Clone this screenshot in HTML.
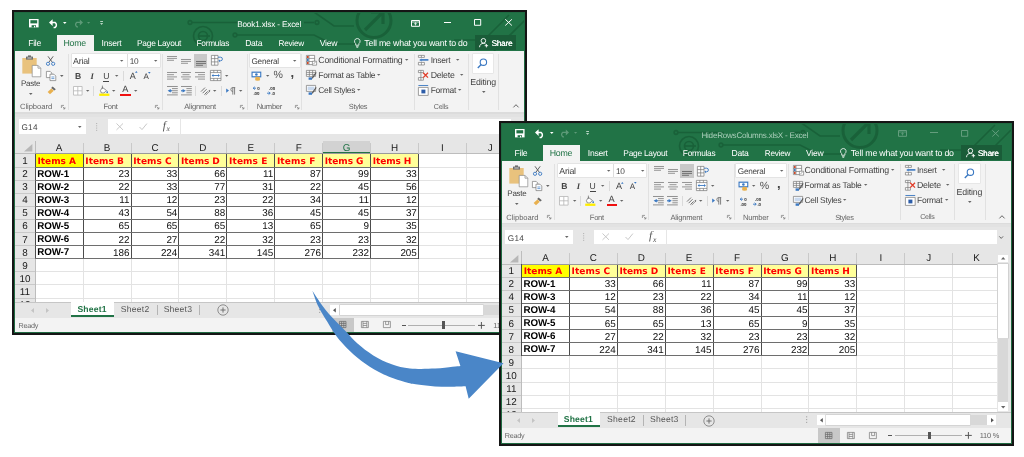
<!DOCTYPE html>
<html lang="en"><head><meta charset="utf-8"><title>Hide rows and columns in Excel</title>
<style>
html,body{margin:0;padding:0;background:#fff;}
body{width:1024px;height:457px;position:relative;overflow:hidden;font-family:"Liberation Sans",sans-serif;text-rendering:geometricPrecision;}
.win{position:absolute;width:511px;height:321px;border:2px solid #151515;overflow:hidden;background:#217346;filter:blur(0.5px);}
.win div,.win span,.win svg,body>svg{position:absolute;display:block;overflow:visible;}
.win span{white-space:pre;line-height:1em;}
</style></head><body>
<div class="win" style="left:12px;top:10px"><div style="left:0px;top:0px;width:511px;height:321px;"><div style="left:0px;top:0px;width:512px;height:39px;background:#217346;"></div><svg style="left:0px;top:0px;overflow:hidden;" width="512" height="39" viewBox="0 0 512 39"><g fill="none" stroke="#196139" stroke-width="1.7" opacity="0.95"><circle cx="176" cy="10.5" r="1.8"/><path d="M178 10.5H224"/><circle cx="189" cy="24" r="9.5"/><circle cx="189" cy="24" r="4.5"/><path d="M184 24H196"/><circle cx="221" cy="23" r="1.8"/><path d="M223 23H300L318 32H345"/><path d="M290 10.5H300"/><circle cx="303" cy="10.5" r="1.8"/><circle cx="360" cy="8.5" r="17" stroke-width="3"/><path d="M351 18L369 0M357 0H369V12" stroke-width="3.2"/><path d="M300 0L320 14H340"/><path d="M440 28H470L495 3"/><path d="M480 39L511 8"/></g></svg><svg style="left:14.6px;top:6.6px;" width="9.6" height="8.4" viewBox="0 0 9.6 8.4"><path d="M0 0H9.6V8.4H0Z" fill="#fff"/><path d="M1.4 1.2H8.2V4.4H1.4Z" fill="#217346"/><path d="M2.6 6.2H7V8.4H2.6Z" fill="#217346"/><path d="M5 6.8H6.2V8.4H5Z" fill="#fff"/></svg><svg style="left:35px;top:6.6px;" width="10.4" height="8.8" viewBox="0 0 10.4 8.8"><path d="M1 3.6H6.2A3 3 0 0 1 6.2 8.4H4.6" fill="none" stroke="#fff" stroke-width="1.5"/><path d="M0 3.6L3.6 0.2V7Z" fill="#fff"/></svg><svg style="left:49.2px;top:10.01px;" width="3.6" height="1.98" viewBox="0 0 3.6 1.98"><path d="M0 0H3.6L1.8 1.98Z" fill="#fff"/></svg><svg style="left:58.6px;top:6.8px;" width="10" height="8" viewBox="0 0 10 8"><path d="M9 3.4H3.8A2.6 2.6 0 0 0 3.8 7.8H5" fill="none" stroke="#5d9a78" stroke-width="1.3"/><path d="M10 3.4L6.8 0.4V6.4Z" fill="#5d9a78"/></svg><svg style="left:73.4px;top:10.12px;" width="3.2" height="1.76" viewBox="0 0 3.2 1.76"><path d="M0 0H3.2L1.6 1.76Z" fill="#5d9a78"/></svg><svg style="left:85.6px;top:9px;" width="3.2" height="4.4" viewBox="0 0 3.2 4.4"><path d="M0.2 0H3V0.9H0.2Z M0 2H3.2L1.6 4Z" fill="#b5d3c2"/></svg><span style="left:223.15px;top:9.3px;font-size:8.2px;color:#fff;letter-spacing:-0.16px;">Book1.xlsx - Excel</span><svg style="left:397.2px;top:7.6px;opacity:1.0;" width="9" height="6.8" viewBox="0 0 9 6.8"><path d="M0.5 0.5H8.5V6.3H0.5Z" fill="none" stroke="#fff" stroke-width="1"/><path d="M0.5 2H8.5" stroke="#fff" stroke-width="0.8"/><path d="M4.5 5.4V2.8M3.2 4L4.5 2.8L5.8 4" fill="none" stroke="#fff" stroke-width="0.8"/></svg><div style="left:430px;top:10px;width:7.2px;height:1px;background:#fff;opacity:1.0;"></div><svg style="left:460.2px;top:7.4px;opacity:1.0;" width="7.2" height="6.8" viewBox="0 0 7.2 6.8"><path d="M0.5 0.5H6.7V6.3H0.5Z" fill="none" stroke="#fff" stroke-width="1"/></svg><svg style="left:491.2px;top:7.4px;opacity:1.0;" width="7.2" height="6.8" viewBox="0 0 7.2 6.8"><path d="M0.3 0.3L6.9 6.5M6.9 0.3L0.3 6.5" fill="none" stroke="#fff" stroke-width="1"/></svg><div style="left:42.9px;top:23px;width:36.9px;height:16.2px;background:#f3f3f3;"></div><span style="left:14.15px;top:26.75px;font-size:8.7px;color:#fff;letter-spacing:-0.28px;">File</span><span style="left:49.45px;top:26.7px;font-size:8.8px;color:#217346;letter-spacing:-0.24px;">Home</span><span style="left:87.55px;top:26.8px;font-size:8.6px;color:#fff;letter-spacing:-0.27px;">Insert</span><span style="left:123.05px;top:26.9px;font-size:8.4px;color:#fff;letter-spacing:-0.27px;">Page Layout</span><span style="left:182.55px;top:26.95px;font-size:8.3px;color:#fff;letter-spacing:-0.26px;">Formulas</span><span style="left:231.15px;top:26.8px;font-size:8.6px;color:#fff;letter-spacing:-0.27px;">Data</span><span style="left:264.55px;top:27.5px;font-size:8.2px;color:#fff;letter-spacing:-0.25px;">Review</span><span style="left:305.65px;top:26.8px;font-size:8.6px;color:#fff;letter-spacing:-0.25px;">View</span><svg style="left:339.6px;top:26.2px;" width="6.6" height="10" viewBox="0 0 6.6 10"><path d="M3.3 0.5A2.8 2.8 0 0 1 4.9 5.6V7.2H1.7V5.6A2.8 2.8 0 0 1 3.3 0.5Z" fill="none" stroke="#fff" stroke-width="0.8"/><path d="M2 8.3H4.6M2.4 9.4H4.2" stroke="#fff" stroke-width="0.7"/></svg><span style="left:350.35px;top:26.7px;font-size:8.8px;color:#fff;letter-spacing:-0.2px;">Tell me what you want to do</span><div style="left:460.8px;top:22.8px;width:41.2px;height:15.2px;background:#1a5c38;"></div><svg style="left:465.4px;top:26px;" width="9.6" height="9.6" viewBox="0 0 9.6 9.6"><circle cx="4.4" cy="2.8" r="2.3" fill="none" stroke="#fff" stroke-width="0.9"/><path d="M0.5 9.2C0.8 6.4 2.4 5.4 4.4 5.4C5.4 5.4 6 5.6 6.6 6" fill="none" stroke="#fff" stroke-width="0.9"/><path d="M7.4 6V9.4M5.7 7.7H9.1" stroke="#fff" stroke-width="0.9"/></svg><span style="left:477.55px;top:27.5px;font-size:8.2px;color:#fff;letter-spacing:-0.24px;text-shadow:0.25px 0 0 #fff;">Share</span><div style="left:0px;top:39px;width:512px;height:61.4px;background:#f3f3f3;"></div><div style="left:0px;top:100.4px;width:512px;height:1.2px;background:#dcdcdc;"></div><div style="left:0px;top:101.6px;width:512px;height:3px;background:#e2e2e2;"></div><div style="left:53.6px;top:42px;width:0.9px;height:56px;background:#e1e1e1;"></div><div style="left:148px;top:42px;width:0.9px;height:56px;background:#e1e1e1;"></div><div style="left:233.2px;top:42px;width:0.9px;height:56px;background:#e1e1e1;"></div><div style="left:287.4px;top:42px;width:0.9px;height:56px;background:#e1e1e1;"></div><div style="left:399.8px;top:42px;width:0.9px;height:56px;background:#e1e1e1;"></div><div style="left:454px;top:42px;width:0.9px;height:56px;background:#e1e1e1;"></div><div style="left:484.4px;top:42px;width:0.9px;height:56px;background:#e1e1e1;"></div><span style="left:5.95px;top:91.3px;font-size:7.6px;color:#666;letter-spacing:-0.04px;">Clipboard</span><span style="left:89.45px;top:91.3px;font-size:7.6px;color:#666;letter-spacing:-0.25px;">Font</span><span style="left:170.15px;top:91.3px;font-size:7.6px;color:#666;letter-spacing:-0.23px;">Alignment</span><span style="left:242.65px;top:91.3px;font-size:7.6px;color:#666;letter-spacing:-0.26px;">Number</span><span style="left:334.85px;top:91.4px;font-size:7.4px;color:#666;letter-spacing:-0.28px;">Styles</span><span style="left:419.85px;top:92.05px;font-size:7.1px;color:#666;letter-spacing:-0.28px;">Cells</span><svg style="left:47px;top:92.8px;" width="4.4" height="4.4" viewBox="0 0 4.4 4.4"><path d="M0.4 3V0.4H3" fill="none" stroke="#777" stroke-width="0.7"/><path d="M1.6 1.6L3.8 3.8M3.9 2.2V3.9H2.2" fill="none" stroke="#777" stroke-width="0.7"/></svg><svg style="left:141.4px;top:92.8px;" width="4.4" height="4.4" viewBox="0 0 4.4 4.4"><path d="M0.4 3V0.4H3" fill="none" stroke="#777" stroke-width="0.7"/><path d="M1.6 1.6L3.8 3.8M3.9 2.2V3.9H2.2" fill="none" stroke="#777" stroke-width="0.7"/></svg><svg style="left:226.4px;top:92.8px;" width="4.4" height="4.4" viewBox="0 0 4.4 4.4"><path d="M0.4 3V0.4H3" fill="none" stroke="#777" stroke-width="0.7"/><path d="M1.6 1.6L3.8 3.8M3.9 2.2V3.9H2.2" fill="none" stroke="#777" stroke-width="0.7"/></svg><svg style="left:280.6px;top:92.8px;" width="4.4" height="4.4" viewBox="0 0 4.4 4.4"><path d="M0.4 3V0.4H3" fill="none" stroke="#777" stroke-width="0.7"/><path d="M1.6 1.6L3.8 3.8M3.9 2.2V3.9H2.2" fill="none" stroke="#777" stroke-width="0.7"/></svg><svg style="left:499px;top:92.4px;" width="6" height="3.8" viewBox="0 0 6 3.8"><path d="M0.4 3.4L3 0.7L5.6 3.4" fill="none" stroke="#555" stroke-width="0.9"/></svg><svg style="left:8.4px;top:42.6px;" width="19.4" height="22.2" viewBox="0 0 19.4 22.2"><path d="M0.3 3H14.7V18.6H0.3Z" fill="#e9c27d"/><path d="M4 1.6H11V4.6H4Z" fill="#6d6d6d"/><path d="M6 0.4H9V2.4H6Z" fill="#6d6d6d"/><path d="M5.4 3H9.6" stroke="#fff" stroke-width="0.7"/><path d="M10.2 10.4H16L18.8 13.2V21.8H10.2Z" fill="#fff" stroke="#8a8a8a" stroke-width="0.7"/><path d="M16 10.4V13.2H18.8" fill="none" stroke="#8a8a8a" stroke-width="0.7"/></svg><span style="left:7.05px;top:67.5px;font-size:8px;color:#444;letter-spacing:-0.27px;">Paste</span><svg style="left:14.7px;top:80.61px;" width="3.6" height="1.98" viewBox="0 0 3.6 1.98"><path d="M0 0H3.6L1.8 1.98Z" fill="#666"/></svg><svg style="left:32.2px;top:43.6px;" width="9.2" height="9.8" viewBox="0 0 9.2 9.8"><path d="M2 0.3L6.4 6.4M7.2 0.3L2.8 6.4" stroke="#555" stroke-width="0.9" fill="none"/><circle cx="2" cy="7.8" r="1.6" fill="none" stroke="#3a78c2" stroke-width="0.9"/><circle cx="7.2" cy="7.8" r="1.6" fill="none" stroke="#3a78c2" stroke-width="0.9"/></svg><svg style="left:32px;top:58.6px;" width="10.4" height="10" viewBox="0 0 10.4 10"><path d="M0.4 0.4H4.2L5.8 2V6.6H0.4Z" fill="#fff" stroke="#777" stroke-width="0.7"/><path d="M4 3.2H8L9.8 5V9.6H4Z" fill="#fff" stroke="#777" stroke-width="0.7"/><path d="M5.4 6H8.4M5.4 7.6H8.4" stroke="#3a78c2" stroke-width="0.7"/></svg><svg style="left:45.5px;top:62.61px;" width="3.6" height="1.98" viewBox="0 0 3.6 1.98"><path d="M0 0H3.6L1.8 1.98Z" fill="#666"/></svg><svg style="left:32.8px;top:74.4px;" width="9.4" height="8.6" viewBox="0 0 9.4 8.6"><path d="M5.6 0.6L8.8 3.2L7.4 4.6L4.2 2Z" fill="#666"/><path d="M4.4 2.6L6.8 4.8L3 8.2L0.6 6Z" fill="#e8b04e"/></svg><div style="left:57.5px;top:41.6px;width:55.4px;height:13.6px;background:#fff;box-shadow:0 0 0 0.5px #d6d6d6;"></div><div style="left:113.6px;top:41.6px;width:32px;height:13.6px;background:#fff;box-shadow:0 0 0 0.5px #d6d6d6;"></div><span style="left:59.05px;top:44.9px;font-size:8.8px;color:#444;letter-spacing:-0.22px;">Arial</span><svg style="left:106.3px;top:47.66px;" width="3.4" height="1.87" viewBox="0 0 3.4 1.87"><path d="M0 0H3.4L1.7 1.87Z" fill="#666"/></svg><span style="left:115.65px;top:45.15px;font-size:8.3px;color:#444;letter-spacing:-0.27px;">10</span><svg style="left:140.3px;top:47.66px;" width="3.4" height="1.87" viewBox="0 0 3.4 1.87"><path d="M0 0H3.4L1.7 1.87Z" fill="#666"/></svg><span style="left:61px;top:59.6px;font-size:8.6px;color:#444;font-weight:700;">B</span><span style="left:76.4px;top:59.6px;font-size:8.6px;color:#444;font-weight:700;font-style:italic;font-family:'Liberation Serif',serif;">I</span><span style="left:89.2px;top:59.6px;font-size:8.6px;color:#444;border-bottom:0.8px solid #444;padding-bottom:0.6px;">U</span><svg style="left:100.8px;top:62.66px;" width="3.4" height="1.87" viewBox="0 0 3.4 1.87"><path d="M0 0H3.4L1.7 1.87Z" fill="#666"/></svg><div style="left:108.5px;top:59px;width:0.8px;height:10px;background:#dadada;"></div><span style="left:115.8px;top:59.7px;font-size:9px;color:#444;">A</span><svg style="left:121px;top:59.4px;" width="2.6" height="1.8" viewBox="0 0 2.6 1.8"><path d="M0 1.8L1.3 0L2.6 1.8Z" fill="#3a78c2"/></svg><span style="left:129.4px;top:60.7px;font-size:8px;color:#444;">A</span><svg style="left:134px;top:59.6px;" width="2.6" height="1.8" viewBox="0 0 2.6 1.8"><path d="M0 0L1.3 1.8L2.6 0Z" fill="#3a78c2"/></svg><svg style="left:59px;top:74px;" width="9.6" height="9.6" viewBox="0 0 9.6 9.6"><path d="M0.5 0.5H9.1V9.1H0.5ZM4.8 0.5V9.1M0.5 4.8H9.1" fill="#fff" stroke="#b5b5b5" stroke-width="0.8"/></svg><svg style="left:72.3px;top:77.66px;" width="3.4" height="1.87" viewBox="0 0 3.4 1.87"><path d="M0 0H3.4L1.7 1.87Z" fill="#666"/></svg><div style="left:79.2px;top:73.5px;width:0.8px;height:10px;background:#dadada;"></div><svg style="left:85px;top:73px;" width="10.6" height="11" viewBox="0 0 10.6 11"><path d="M3.4 2.4L7.4 5.4L5 8H2.4L1.4 5.6Z" fill="#fff" stroke="#666" stroke-width="0.7"/><path d="M3.4 0.6V4" stroke="#666" stroke-width="0.7"/><path d="M8 5.6C8.8 6.6 9 7 9 7.5A0.8 0.8 0 0 1 7.4 7.5C7.4 7 7.6 6.6 8 5.6Z" fill="#3a78c2"/><path d="M0.2 8.6H10.4V10.9H0.2Z" fill="#ffee00"/></svg><svg style="left:98.3px;top:77.66px;" width="3.4" height="1.87" viewBox="0 0 3.4 1.87"><path d="M0 0H3.4L1.7 1.87Z" fill="#666"/></svg><span style="left:108.2px;top:73px;font-size:9.2px;color:#444;">A</span><div style="left:106.4px;top:81.5px;width:10.4px;height:2.4px;background:#f01010;"></div><svg style="left:119.7px;top:77.66px;" width="3.4" height="1.87" viewBox="0 0 3.4 1.87"><path d="M0 0H3.4L1.7 1.87Z" fill="#666"/></svg><svg style="left:153.4px;top:44.2px;" width="10" height="6.2" viewBox="0 0 10 6.2"><path d="M0 0.5H10" stroke="#8a8a8a" stroke-width="0.9"/><path d="M0 2.4H10" stroke="#8a8a8a" stroke-width="0.9"/><path d="M0 4.3H7" stroke="#8a8a8a" stroke-width="0.9"/></svg><svg style="left:167.3px;top:46.6px;" width="10" height="6.2" viewBox="0 0 10 6.2"><path d="M0 0.5H10" stroke="#8a8a8a" stroke-width="0.9"/><path d="M0 2.4H10" stroke="#8a8a8a" stroke-width="0.9"/><path d="M0 4.3H7" stroke="#8a8a8a" stroke-width="0.9"/></svg><div style="left:179.5px;top:41.6px;width:13.8px;height:14.2px;background:#c8c8c8;"></div><svg style="left:181.6px;top:48.6px;" width="10" height="6.2" viewBox="0 0 10 6.2"><path d="M0 0.5H10" stroke="#666" stroke-width="0.9"/><path d="M0 2.4H10" stroke="#666" stroke-width="0.9"/><path d="M0 4.3H7" stroke="#666" stroke-width="0.9"/></svg><svg style="left:196.6px;top:43.4px;" width="12" height="10.6" viewBox="0 0 12 10.6"><path d="M0.4 0.4H7V10.2H0.4ZM0.4 3.6H7M0.4 6.9H7M3.7 0.4V10.2" fill="#fff" stroke="#777" stroke-width="0.7"/><path d="M7 2.2H9.6A1.8 1.8 0 0 1 9.6 5.8H8.2" fill="none" stroke="#3a78c2" stroke-width="0.9"/><path d="M8.8 4.4L7.4 5.8L8.8 7.2Z" fill="#3a78c2"/></svg><svg style="left:153.4px;top:59.8px;" width="10" height="9.3" viewBox="0 0 10 9.3"><path d="M0 0.5H10" stroke="#8a8a8a" stroke-width="0.9"/><path d="M0 2.7H7" stroke="#8a8a8a" stroke-width="0.9"/><path d="M0 4.9H10" stroke="#8a8a8a" stroke-width="0.9"/><path d="M0 7.1H7" stroke="#8a8a8a" stroke-width="0.9"/></svg><svg style="left:167.3px;top:59.8px;" width="10" height="9.3" viewBox="0 0 10 9.3"><path d="M0 0.5H10" stroke="#8a8a8a" stroke-width="0.9"/><path d="M1.5 2.7H8.5" stroke="#8a8a8a" stroke-width="0.9"/><path d="M0 4.9H10" stroke="#8a8a8a" stroke-width="0.9"/><path d="M1.5 7.1H8.5" stroke="#8a8a8a" stroke-width="0.9"/></svg><svg style="left:181.4px;top:59.8px;" width="10" height="9.3" viewBox="0 0 10 9.3"><path d="M0 0.5H10" stroke="#8a8a8a" stroke-width="0.9"/><path d="M3 2.7H10" stroke="#8a8a8a" stroke-width="0.9"/><path d="M0 4.9H10" stroke="#8a8a8a" stroke-width="0.9"/><path d="M3 7.1H10" stroke="#8a8a8a" stroke-width="0.9"/></svg><svg style="left:196px;top:58px;" width="11.4" height="11" viewBox="0 0 11.4 11"><path d="M0.4 0.4H11V10.6H0.4ZM0.4 2.6H11M0.4 8.4H11M3.8 0.4V2.6M7.4 0.4V2.6M3.8 8.4V10.6M7.4 8.4V10.6" fill="#fff" stroke="#777" stroke-width="0.7"/><path d="M2.2 5.5H9.2" stroke="#3a78c2" stroke-width="0.9"/><path d="M3.4 4L1.6 5.5L3.4 7ZM8 4L9.8 5.5L8 7Z" fill="#3a78c2"/></svg><svg style="left:210.9px;top:62.66px;" width="3.4" height="1.87" viewBox="0 0 3.4 1.87"><path d="M0 0H3.4L1.7 1.87Z" fill="#666"/></svg><svg style="left:152.6px;top:74px;" width="10.8" height="9.4" viewBox="0 0 10.8 9.4"><path d="M0 0.5H10.8M5 2.6H10.8M5 4.7H10.8M5 6.8H10.8M0 8.9H10.8" stroke="#777" stroke-width="0.8"/><path d="M3.8 3V6.6L0.6 4.8Z" fill="#3a78c2"/><path d="M2 4.8H5" stroke="#3a78c2" stroke-width="1.2"/></svg><svg style="left:166.8px;top:74px;" width="10.8" height="9.4" viewBox="0 0 10.8 9.4"><path d="M0 0.5H10.8M5.4 2.6H10.8M5.4 4.7H10.8M5.4 6.8H10.8M0 8.9H10.8" stroke="#777" stroke-width="0.8"/><path d="M1.6 3V6.6L4.8 4.8Z" fill="#3a78c2"/><path d="M0 4.8H3" stroke="#3a78c2" stroke-width="1.2"/></svg><div style="left:181.2px;top:73.5px;width:0.8px;height:10px;background:#dadada;"></div><svg style="left:185.8px;top:73.6px;" width="10.6" height="10" viewBox="0 0 10.6 10"><path d="M1 5.6L5 1.6M2.6 7.2L6.6 3.2M4.4 8.6L7.6 5.4" stroke="#666" stroke-width="0.9"/><path d="M5.6 9.2L9.8 5" stroke="#777" stroke-width="0.8"/><path d="M10.2 3.8L10 6.2L8.4 4.6Z" fill="#777"/></svg><svg style="left:198.7px;top:77.66px;" width="3.4" height="1.87" viewBox="0 0 3.4 1.87"><path d="M0 0H3.4L1.7 1.87Z" fill="#666"/></svg><div style="left:207px;top:73.5px;width:0.8px;height:10px;background:#dadada;"></div><svg style="left:212px;top:74.6px;" width="9.4" height="8" viewBox="0 0 9.4 8"><path d="M0.2 1.4V5.8L3 3.6Z" fill="#3a78c2"/><path d="M6.8 0.6V7.6M8.6 0.6V7.6M9.2 0.6H6.2A2 2 0 0 0 6.2 4.4H6.8" fill="none" stroke="#666" stroke-width="0.8"/></svg><svg style="left:225.3px;top:77.66px;" width="3.4" height="1.87" viewBox="0 0 3.4 1.87"><path d="M0 0H3.4L1.7 1.87Z" fill="#666"/></svg><div style="left:235.8px;top:42px;width:49.8px;height:13.2px;background:#fff;box-shadow:0 0 0 0.5px #d6d6d6;"></div><span style="left:237.45px;top:45.7px;font-size:8.2px;color:#444;letter-spacing:-0.24px;">General</span><svg style="left:279.2px;top:47.66px;" width="3.4" height="1.87" viewBox="0 0 3.4 1.87"><path d="M0 0H3.4L1.7 1.87Z" fill="#666"/></svg><svg style="left:237.4px;top:58.8px;" width="10.8" height="10.4" viewBox="0 0 10.8 10.4"><path d="M0.5 0.6H10.3V6.4H0.5Z" fill="#3a78c2"/><path d="M1.6 1.8H9.2V5.2H1.6Z" fill="#fff"/><circle cx="5.4" cy="3.5" r="1.3" fill="#3a78c2"/><ellipse cx="6.6" cy="7" rx="2.6" ry="1.2" fill="#e8b04e"/><ellipse cx="6.6" cy="8.6" rx="2.6" ry="1.2" fill="#e8b04e"/></svg><svg style="left:251.9px;top:62.66px;" width="3.4" height="1.87" viewBox="0 0 3.4 1.87"><path d="M0 0H3.4L1.7 1.87Z" fill="#666"/></svg><span style="left:259.4px;top:58.3px;font-size:10.6px;color:#555;">%</span><span style="left:276.6px;top:54.4px;font-size:13px;color:#444;font-weight:700;">,</span><svg style="left:239.2px;top:74.4px;" width="8.4" height="9.2" viewBox="0 0 8.4 9.2"><path d="M0 2.2H3M1.8 0.8L0.2 2.2L1.8 3.6" fill="none" stroke="#3a78c2" stroke-width="0.9"/><text x="4.2" y="3.6" font-size="4.4" fill="#333" font-weight="700" font-family="Liberation Sans,sans-serif">0</text><text x="0.4" y="8.8" font-size="4.4" fill="#333" font-weight="700" font-family="Liberation Sans,sans-serif">.00</text></svg><svg style="left:252.6px;top:74.4px;" width="8.6" height="9.2" viewBox="0 0 8.6 9.2"><text x="2" y="3.6" font-size="4.4" fill="#333" font-weight="700" font-family="Liberation Sans,sans-serif">.00</text><path d="M0 7.2H3.2M1.6 5.8L3.2 7.2L1.6 8.6" fill="none" stroke="#3a78c2" stroke-width="0.9"/><text x="4.4" y="8.8" font-size="4.4" fill="#333" font-weight="700" font-family="Liberation Sans,sans-serif">.0</text></svg><svg style="left:292.2px;top:42.8px;" width="11" height="10.6" viewBox="0 0 11 10.6"><path d="M0.4 0.4H8.6V9.6H0.4ZM0.4 3.4H8.6M0.4 6.5H8.6M3 0.4V9.6" fill="#fff" stroke="#777" stroke-width="0.7"/><path d="M1 1H2.6V3H1Z" fill="#d24726"/><path d="M1 3.8H2.6V6H1Z" fill="#3a78c2"/><path d="M1 6.9H2.6V9H1Z" fill="#d24726"/><path d="M6.4 6.2H10.6V10.2H6.4Z" fill="#fff" stroke="#666" stroke-width="0.6"/><path d="M7.4 8.8L9.6 7.2" stroke="#666" stroke-width="0.6"/></svg><svg style="left:292.2px;top:58.4px;" width="11" height="10.6" viewBox="0 0 11 10.6"><path d="M0.4 0.4H9.6V6.4H0.4ZM0.4 2.4H9.6M0.4 4.4H9.6M3.4 0.4V6.4M6.6 0.4V6.4" fill="#fff" stroke="#777" stroke-width="0.7"/><path d="M9.8 2L6 7.4L5.4 9L7 8.2L10.6 2.8Z" fill="#555"/><path d="M2.6 7.4H6V9.8H2.6Z" fill="#3a78c2"/></svg><svg style="left:292.2px;top:73.4px;" width="11" height="10.6" viewBox="0 0 11 10.6"><path d="M0.4 0.4H9.6V6.4H0.4Z" fill="#fff" stroke="#777" stroke-width="0.7"/><path d="M1.6 1.6H8.4V5.2H1.6Z" fill="#c9d9ee"/><path d="M9.8 2L6 7.4L5.4 9L7 8.2L10.6 2.8Z" fill="#555"/><path d="M2.6 7.4H6V9.8H2.6Z" fill="#3a78c2"/></svg><span style="left:304.25px;top:44.1px;font-size:8.8px;color:#444;letter-spacing:-0.19px;">Conditional Formatting</span><svg style="left:390.8px;top:47.27px;" width="3.4" height="1.87" viewBox="0 0 3.4 1.87"><path d="M0 0H3.4L1.7 1.87Z" fill="#666"/></svg><span style="left:304.25px;top:58.85px;font-size:8.5px;color:#444;letter-spacing:-0.25px;">Format as Table</span><svg style="left:363.2px;top:61.86px;" width="3.4" height="1.87" viewBox="0 0 3.4 1.87"><path d="M0 0H3.4L1.7 1.87Z" fill="#666"/></svg><span style="left:304.25px;top:73.8px;font-size:8.4px;color:#444;letter-spacing:-0.24px;">Cell Styles</span><svg style="left:343px;top:76.86px;" width="3.4" height="1.87" viewBox="0 0 3.4 1.87"><path d="M0 0H3.4L1.7 1.87Z" fill="#666"/></svg><svg style="left:404.2px;top:42.8px;" width="10.8" height="10.4" viewBox="0 0 10.8 10.4"><path d="M0.4 0.4H6.4V2.4H0.4ZM0.4 7.4H6.4V10H0.4ZM3.4 0.4V2.4M3.4 7.4V10" fill="#fff" stroke="#777" stroke-width="0.7"/><path d="M3.2 4.9H10.4" stroke="#3a78c2" stroke-width="1.6"/><path d="M3.6 3.4L1.2 4.9L3.6 6.4Z" fill="#3a78c2"/></svg><svg style="left:404.2px;top:57.8px;" width="10.8" height="10.6" viewBox="0 0 10.8 10.6"><path d="M0.4 0.4H5.4V2.6H0.4ZM0.4 7.6H5.4V10.2H0.4ZM2.9 0.4V10.2" fill="#fff" stroke="#777" stroke-width="0.7"/><path d="M5.2 2.8L10 7.6M10 2.8L5.2 7.6" stroke="#e03c28" stroke-width="1.3"/></svg><svg style="left:404.2px;top:72.8px;" width="10.8" height="10.8" viewBox="0 0 10.8 10.8"><path d="M0.4 2.4H10.2V10.4H0.4Z" fill="#fff" stroke="#777" stroke-width="0.7"/><path d="M0.4 0.5H10.2" stroke="#3a78c2" stroke-width="0.9"/><path d="M3.4 4.6H7.4V8.4H3.4Z" fill="#2d5da8"/></svg><span style="left:416.65px;top:44.25px;font-size:8.5px;color:#444;letter-spacing:-0.26px;">Insert</span><svg style="left:441.7px;top:47.27px;" width="3.4" height="1.87" viewBox="0 0 3.4 1.87"><path d="M0 0H3.4L1.7 1.87Z" fill="#666"/></svg><span style="left:416.65px;top:58.7px;font-size:8.8px;color:#444;letter-spacing:-0.26px;">Delete</span><svg style="left:446.1px;top:61.86px;" width="3.4" height="1.87" viewBox="0 0 3.4 1.87"><path d="M0 0H3.4L1.7 1.87Z" fill="#666"/></svg><span style="left:416.65px;top:73.75px;font-size:8.5px;color:#444;letter-spacing:-0.24px;">Format</span><svg style="left:444.2px;top:76.86px;" width="3.4" height="1.87" viewBox="0 0 3.4 1.87"><path d="M0 0H3.4L1.7 1.87Z" fill="#666"/></svg><div style="left:458.5px;top:41.6px;width:20.8px;height:19.4px;background:#fff;box-shadow:0 0 0 0.5px #dcdcdc;"></div><svg style="left:463.4px;top:45.6px;" width="10.6" height="10.6" viewBox="0 0 10.6 10.6"><circle cx="6.4" cy="4.2" r="3.2" fill="none" stroke="#3a78c2" stroke-width="1.1"/><path d="M4.2 6.6L0.8 10" stroke="#3a78c2" stroke-width="1.4"/></svg><span style="left:456.25px;top:65.6px;font-size:8.8px;color:#444;letter-spacing:-0.17px;">Editing</span><svg style="left:467.6px;top:79.21px;" width="3.6" height="1.98" viewBox="0 0 3.6 1.98"><path d="M0 0H3.6L1.8 1.98Z" fill="#666"/></svg><div style="left:0px;top:104.6px;width:512px;height:24.6px;background:#e6e6e6;"></div><div style="left:4.7px;top:107.4px;width:67.8px;height:14.6px;background:#fff;"></div><span style="left:7.45px;top:112.4px;font-size:8.2px;color:#444;letter-spacing:0.27px;">G14</span><svg style="left:64.4px;top:114.01px;" width="3.6" height="1.98" viewBox="0 0 3.6 1.98"><path d="M0 0H3.6L1.8 1.98Z" fill="#666"/></svg><svg style="left:82.4px;top:110.6px;" width="1.2" height="8" viewBox="0 0 1.2 8"><path d="M0 0.5H1.2M0 2.8H1.2M0 5.1H1.2M0 7.4H1.2" stroke="#aaa" stroke-width="0.8"/></svg><div style="left:93.8px;top:107.4px;width:72.2px;height:14.6px;background:#fff;"></div><svg style="left:101.6px;top:111px;" width="7.6" height="7.4" viewBox="0 0 7.6 7.4"><path d="M0.5 0.5L7 6.9M7 0.5L0.5 6.9" stroke="#c2c2c2" stroke-width="0.9" fill="none"/></svg><svg style="left:125px;top:111px;" width="8.4" height="7.4" viewBox="0 0 8.4 7.4"><path d="M0.5 4L3 6.6L7.9 0.6" stroke="#c2c2c2" stroke-width="0.9" fill="none"/></svg><span style="left:148.8px;top:109.05px;font-size:11.5px;color:#555;font-style:italic;font-family:'Liberation Serif',serif;">f</span><span style="left:152.6px;top:113.3px;font-size:7.6px;color:#555;font-style:italic;font-family:'Liberation Serif',serif;">x</span><div style="left:0px;top:129.2px;width:512px;height:161px;background:#fff;"></div><div style="left:0px;top:129.2px;width:512px;height:12.7px;background:#e6e6e6;"></div><div style="left:0px;top:129.2px;width:21.2px;height:161px;background:#e6e6e6;"></div><svg style="left:10px;top:132.4px;" width="8.4" height="7.6" viewBox="0 0 8.4 7.6"><path d="M8.4 0V7.6H0Z" fill="#b7b7b7"/></svg><div style="left:20.7px;top:141.9px;width:1px;height:148.3px;background:#e3e3e3;"></div><div style="left:20.7px;top:130.7px;width:1px;height:11.2px;background:#c9c9c9;"></div><div style="left:68.6px;top:141.9px;width:1px;height:148.3px;background:#e3e3e3;"></div><div style="left:68.6px;top:130.7px;width:1px;height:11.2px;background:#c9c9c9;"></div><div style="left:116.5px;top:141.9px;width:1px;height:148.3px;background:#e3e3e3;"></div><div style="left:116.5px;top:130.7px;width:1px;height:11.2px;background:#c9c9c9;"></div><div style="left:164.4px;top:141.9px;width:1px;height:148.3px;background:#e3e3e3;"></div><div style="left:164.4px;top:130.7px;width:1px;height:11.2px;background:#c9c9c9;"></div><div style="left:212.3px;top:141.9px;width:1px;height:148.3px;background:#e3e3e3;"></div><div style="left:212.3px;top:130.7px;width:1px;height:11.2px;background:#c9c9c9;"></div><div style="left:260.2px;top:141.9px;width:1px;height:148.3px;background:#e3e3e3;"></div><div style="left:260.2px;top:130.7px;width:1px;height:11.2px;background:#c9c9c9;"></div><div style="left:308.1px;top:141.9px;width:1px;height:148.3px;background:#e3e3e3;"></div><div style="left:308.1px;top:130.7px;width:1px;height:11.2px;background:#c9c9c9;"></div><div style="left:356px;top:141.9px;width:1px;height:148.3px;background:#e3e3e3;"></div><div style="left:356px;top:130.7px;width:1px;height:11.2px;background:#c9c9c9;"></div><div style="left:403.9px;top:141.9px;width:1px;height:148.3px;background:#e3e3e3;"></div><div style="left:403.9px;top:130.7px;width:1px;height:11.2px;background:#c9c9c9;"></div><div style="left:451.8px;top:141.9px;width:1px;height:148.3px;background:#e3e3e3;"></div><div style="left:451.8px;top:130.7px;width:1px;height:11.2px;background:#c9c9c9;"></div><div style="left:499.7px;top:141.9px;width:1px;height:148.3px;background:#e3e3e3;"></div><div style="left:499.7px;top:130.7px;width:1px;height:11.2px;background:#c9c9c9;"></div><div style="left:21.2px;top:141.4px;width:489.8px;height:1px;background:#e3e3e3;"></div><div style="left:0px;top:141.4px;width:21.2px;height:1px;background:#c9c9c9;"></div><div style="left:21.2px;top:154.5px;width:489.8px;height:1px;background:#e3e3e3;"></div><div style="left:0px;top:154.5px;width:21.2px;height:1px;background:#c9c9c9;"></div><div style="left:21.2px;top:167.6px;width:489.8px;height:1px;background:#e3e3e3;"></div><div style="left:0px;top:167.6px;width:21.2px;height:1px;background:#c9c9c9;"></div><div style="left:21.2px;top:180.7px;width:489.8px;height:1px;background:#e3e3e3;"></div><div style="left:0px;top:180.7px;width:21.2px;height:1px;background:#c9c9c9;"></div><div style="left:21.2px;top:193.8px;width:489.8px;height:1px;background:#e3e3e3;"></div><div style="left:0px;top:193.8px;width:21.2px;height:1px;background:#c9c9c9;"></div><div style="left:21.2px;top:206.9px;width:489.8px;height:1px;background:#e3e3e3;"></div><div style="left:0px;top:206.9px;width:21.2px;height:1px;background:#c9c9c9;"></div><div style="left:21.2px;top:220px;width:489.8px;height:1px;background:#e3e3e3;"></div><div style="left:0px;top:220px;width:21.2px;height:1px;background:#c9c9c9;"></div><div style="left:21.2px;top:233.1px;width:489.8px;height:1px;background:#e3e3e3;"></div><div style="left:0px;top:233.1px;width:21.2px;height:1px;background:#c9c9c9;"></div><div style="left:21.2px;top:246.2px;width:489.8px;height:1px;background:#e3e3e3;"></div><div style="left:0px;top:246.2px;width:21.2px;height:1px;background:#c9c9c9;"></div><div style="left:21.2px;top:259.3px;width:489.8px;height:1px;background:#e3e3e3;"></div><div style="left:0px;top:259.3px;width:21.2px;height:1px;background:#c9c9c9;"></div><div style="left:21.2px;top:272.4px;width:489.8px;height:1px;background:#e3e3e3;"></div><div style="left:0px;top:272.4px;width:21.2px;height:1px;background:#c9c9c9;"></div><div style="left:21.2px;top:285.5px;width:489.8px;height:1px;background:#e3e3e3;"></div><div style="left:0px;top:285.5px;width:21.2px;height:1px;background:#c9c9c9;"></div><div style="left:0px;top:141.3px;width:512px;height:1px;background:#bdbdbd;"></div><div style="left:20.6px;top:129.2px;width:1px;height:161px;background:#bdbdbd;"></div><span style="left:41.85px;top:131.65px;font-size:9.9px;color:#222;">A</span><span style="left:89.75px;top:131.65px;font-size:9.9px;color:#222;">B</span><span style="left:137.38px;top:131.65px;font-size:9.9px;color:#222;">C</span><span style="left:185.28px;top:131.65px;font-size:9.9px;color:#222;">D</span><span style="left:233.45px;top:131.65px;font-size:9.9px;color:#222;">E</span><span style="left:281.63px;top:131.65px;font-size:9.9px;color:#222;">F</span><div style="left:308.6px;top:129.2px;width:47.9px;height:11.1px;background:#d2d2d2;"></div><div style="left:308.6px;top:139.9px;width:47.9px;height:1.8px;background:#217346;"></div><span style="left:328.7px;top:131.65px;font-size:9.9px;color:#217346;">G</span><span style="left:376.88px;top:131.65px;font-size:9.9px;color:#222;">H</span><span style="left:426.97px;top:131.65px;font-size:9.9px;color:#222;">I</span><span style="left:473.77px;top:131.65px;font-size:9.9px;color:#222;">J</span><span style="left:8.25px;top:144.95px;font-size:9.9px;color:#1a1a1a;">1</span><span style="left:8.25px;top:158.05px;font-size:9.9px;color:#1a1a1a;">2</span><span style="left:8.25px;top:171.15px;font-size:9.9px;color:#1a1a1a;">3</span><span style="left:8.25px;top:184.25px;font-size:9.9px;color:#1a1a1a;">4</span><span style="left:8.25px;top:197.35px;font-size:9.9px;color:#1a1a1a;">5</span><span style="left:8.25px;top:210.45px;font-size:9.9px;color:#1a1a1a;">6</span><span style="left:8.25px;top:223.55px;font-size:9.9px;color:#1a1a1a;">7</span><span style="left:8.25px;top:236.65px;font-size:9.9px;color:#1a1a1a;">8</span><span style="left:8.25px;top:249.75px;font-size:9.9px;color:#1a1a1a;">9</span><span style="left:5.49px;top:262.85px;font-size:9.9px;color:#1a1a1a;">10</span><span style="left:5.86px;top:275.95px;font-size:9.9px;color:#1a1a1a;">11</span><span style="left:5.49px;top:289.05px;font-size:9.9px;color:#1a1a1a;">12</span><div style="left:21.2px;top:141.9px;width:47.9px;height:13.1px;background:#ffff00;"></div><span style="left:23.4px;top:145.5px;font-size:9px;color:#f00;font-weight:700;font-family:'DejaVu Sans','Liberation Sans',sans-serif;">Items A</span><div style="left:69.1px;top:141.9px;width:47.9px;height:13.1px;background:#ffff99;"></div><span style="left:71.3px;top:145.5px;font-size:9px;color:#f00;font-weight:700;font-family:'DejaVu Sans','Liberation Sans',sans-serif;letter-spacing:0.02px;">Items B</span><div style="left:117px;top:141.9px;width:47.9px;height:13.1px;background:#ffff99;"></div><span style="left:119.2px;top:145.5px;font-size:9px;color:#f00;font-weight:700;font-family:'DejaVu Sans','Liberation Sans',sans-serif;letter-spacing:0.05px;">Items C</span><div style="left:164.9px;top:141.9px;width:47.9px;height:13.1px;background:#ffff99;"></div><span style="left:167.1px;top:145.5px;font-size:9px;color:#f00;font-weight:700;font-family:'DejaVu Sans','Liberation Sans',sans-serif;letter-spacing:-0.07px;">Items D</span><div style="left:212.8px;top:141.9px;width:47.9px;height:13.1px;background:#ffff99;"></div><span style="left:215px;top:145.5px;font-size:9px;color:#f00;font-weight:700;font-family:'DejaVu Sans','Liberation Sans',sans-serif;letter-spacing:0.12px;">Items E</span><div style="left:260.7px;top:141.9px;width:47.9px;height:13.1px;background:#ffff99;"></div><span style="left:262.9px;top:145.5px;font-size:9px;color:#f00;font-weight:700;font-family:'DejaVu Sans','Liberation Sans',sans-serif;letter-spacing:0.12px;">Items F</span><div style="left:308.6px;top:141.9px;width:47.9px;height:13.1px;background:#ffff99;"></div><span style="left:310.8px;top:145.5px;font-size:9px;color:#f00;font-weight:700;font-family:'DejaVu Sans','Liberation Sans',sans-serif;letter-spacing:-0.06px;">Items G</span><div style="left:356.5px;top:141.9px;width:47.9px;height:13.1px;background:#ffff99;"></div><span style="left:358.7px;top:145.5px;font-size:9px;color:#f00;font-weight:700;font-family:'DejaVu Sans','Liberation Sans',sans-serif;letter-spacing:-0.08px;">Items H</span><span style="left:23.25px;top:157.5px;font-size:9.8px;color:#000;font-weight:700;letter-spacing:-0.15px;">ROW-1</span><span style="left:104.49px;top:158.05px;font-size:9.9px;color:#111;">23</span><span style="left:152.39px;top:158.05px;font-size:9.9px;color:#111;">33</span><span style="left:200.29px;top:158.05px;font-size:9.9px;color:#111;">66</span><span style="left:248.92px;top:158.05px;font-size:9.9px;color:#111;">11</span><span style="left:296.09px;top:158.05px;font-size:9.9px;color:#111;">87</span><span style="left:343.99px;top:158.05px;font-size:9.9px;color:#111;">99</span><span style="left:391.89px;top:158.05px;font-size:9.9px;color:#111;">33</span><span style="left:23.25px;top:170.6px;font-size:9.8px;color:#000;font-weight:700;letter-spacing:-0.15px;">ROW-2</span><span style="left:104.49px;top:171.15px;font-size:9.9px;color:#111;">22</span><span style="left:152.39px;top:171.15px;font-size:9.9px;color:#111;">33</span><span style="left:200.29px;top:171.15px;font-size:9.9px;color:#111;">77</span><span style="left:248.19px;top:171.15px;font-size:9.9px;color:#111;">31</span><span style="left:296.09px;top:171.15px;font-size:9.9px;color:#111;">22</span><span style="left:343.99px;top:171.15px;font-size:9.9px;color:#111;">45</span><span style="left:391.89px;top:171.15px;font-size:9.9px;color:#111;">56</span><span style="left:23.25px;top:183.7px;font-size:9.8px;color:#000;font-weight:700;letter-spacing:-0.15px;">ROW-3</span><span style="left:105.22px;top:184.25px;font-size:9.9px;color:#111;">11</span><span style="left:152.39px;top:184.25px;font-size:9.9px;color:#111;">12</span><span style="left:200.29px;top:184.25px;font-size:9.9px;color:#111;">23</span><span style="left:248.19px;top:184.25px;font-size:9.9px;color:#111;">22</span><span style="left:296.09px;top:184.25px;font-size:9.9px;color:#111;">34</span><span style="left:344.72px;top:184.25px;font-size:9.9px;color:#111;">11</span><span style="left:391.89px;top:184.25px;font-size:9.9px;color:#111;">12</span><span style="left:23.25px;top:196.8px;font-size:9.8px;color:#000;font-weight:700;letter-spacing:-0.15px;">ROW-4</span><span style="left:104.49px;top:197.35px;font-size:9.9px;color:#111;">43</span><span style="left:152.39px;top:197.35px;font-size:9.9px;color:#111;">54</span><span style="left:200.29px;top:197.35px;font-size:9.9px;color:#111;">88</span><span style="left:248.19px;top:197.35px;font-size:9.9px;color:#111;">36</span><span style="left:296.09px;top:197.35px;font-size:9.9px;color:#111;">45</span><span style="left:343.99px;top:197.35px;font-size:9.9px;color:#111;">45</span><span style="left:391.89px;top:197.35px;font-size:9.9px;color:#111;">37</span><span style="left:23.25px;top:209.9px;font-size:9.8px;color:#000;font-weight:700;letter-spacing:-0.15px;">ROW-5</span><span style="left:104.49px;top:210.45px;font-size:9.9px;color:#111;">65</span><span style="left:152.39px;top:210.45px;font-size:9.9px;color:#111;">65</span><span style="left:200.29px;top:210.45px;font-size:9.9px;color:#111;">65</span><span style="left:248.19px;top:210.45px;font-size:9.9px;color:#111;">13</span><span style="left:296.09px;top:210.45px;font-size:9.9px;color:#111;">65</span><span style="left:349.49px;top:210.45px;font-size:9.9px;color:#111;">9</span><span style="left:391.89px;top:210.45px;font-size:9.9px;color:#111;">35</span><span style="left:23.25px;top:223px;font-size:9.8px;color:#000;font-weight:700;letter-spacing:-0.15px;">ROW-6</span><span style="left:104.49px;top:223.55px;font-size:9.9px;color:#111;">22</span><span style="left:152.39px;top:223.55px;font-size:9.9px;color:#111;">27</span><span style="left:200.29px;top:223.55px;font-size:9.9px;color:#111;">22</span><span style="left:248.19px;top:223.55px;font-size:9.9px;color:#111;">32</span><span style="left:296.09px;top:223.55px;font-size:9.9px;color:#111;">23</span><span style="left:343.99px;top:223.55px;font-size:9.9px;color:#111;">23</span><span style="left:391.89px;top:223.55px;font-size:9.9px;color:#111;">32</span><span style="left:23.25px;top:236.1px;font-size:9.8px;color:#000;font-weight:700;letter-spacing:-0.15px;">ROW-7</span><span style="left:98.98px;top:236.65px;font-size:9.9px;color:#111;">186</span><span style="left:146.88px;top:236.65px;font-size:9.9px;color:#111;">224</span><span style="left:194.78px;top:236.65px;font-size:9.9px;color:#111;">341</span><span style="left:242.68px;top:236.65px;font-size:9.9px;color:#111;">145</span><span style="left:290.58px;top:236.65px;font-size:9.9px;color:#111;">276</span><span style="left:338.48px;top:236.65px;font-size:9.9px;color:#111;">232</span><span style="left:386.38px;top:236.65px;font-size:9.9px;color:#111;">205</span><div style="left:20.7px;top:141.9px;width:1px;height:104.8px;background:#4c4c4c;"></div><div style="left:68.6px;top:141.9px;width:1px;height:104.8px;background:#4c4c4c;"></div><div style="left:116.5px;top:141.9px;width:1px;height:104.8px;background:#4c4c4c;"></div><div style="left:164.4px;top:141.9px;width:1px;height:104.8px;background:#4c4c4c;"></div><div style="left:212.3px;top:141.9px;width:1px;height:104.8px;background:#4c4c4c;"></div><div style="left:260.2px;top:141.9px;width:1px;height:104.8px;background:#4c4c4c;"></div><div style="left:308.1px;top:141.9px;width:1px;height:104.8px;background:#4c4c4c;"></div><div style="left:356px;top:141.9px;width:1px;height:104.8px;background:#4c4c4c;"></div><div style="left:403.9px;top:141.9px;width:1px;height:104.8px;background:#4c4c4c;"></div><div style="left:21.2px;top:141.4px;width:383.2px;height:1px;background:#9a9a9a;"></div><div style="left:21.2px;top:154.5px;width:383.2px;height:1px;background:#6e6e6e;"></div><div style="left:21.2px;top:167.6px;width:383.2px;height:1px;background:#6e6e6e;"></div><div style="left:21.2px;top:180.7px;width:383.2px;height:1px;background:#6e6e6e;"></div><div style="left:21.2px;top:193.8px;width:383.2px;height:1px;background:#6e6e6e;"></div><div style="left:21.2px;top:206.9px;width:383.2px;height:1px;background:#6e6e6e;"></div><div style="left:21.2px;top:220px;width:383.2px;height:1px;background:#6e6e6e;"></div><div style="left:21.2px;top:233.1px;width:383.2px;height:1px;background:#6e6e6e;"></div><div style="left:21.2px;top:246.2px;width:383.2px;height:1px;background:#6e6e6e;"></div><div style="left:496.6px;top:129.2px;width:15.4px;height:161px;background:#e6e6e6;"></div><div style="left:498px;top:132.4px;width:10px;height:7.6px;background:#fff;"></div><svg style="left:500.8px;top:135px;" width="4.4" height="2.6" viewBox="0 0 4.4 2.6"><path d="M0 2.6L2.2 0L4.4 2.6Z" fill="#666"/></svg><div style="left:498px;top:141.9px;width:10px;height:73.8px;background:#fff;box-shadow:0 0 0 0.6px #c4c4c4;"></div><div style="left:498px;top:215.7px;width:10px;height:64px;background:#d8d8d8;"></div><div style="left:498px;top:279.7px;width:10px;height:9.6px;background:#fff;"></div><svg style="left:500.8px;top:283.4px;" width="4.4" height="2.6" viewBox="0 0 4.4 2.6"><path d="M0 0L2.2 2.6L4.4 0Z" fill="#666"/></svg><div style="left:166.8px;top:107.4px;width:329.8px;height:14.6px;background:#fff;"></div><svg style="left:498.6px;top:113.4px;" width="4.4" height="3" viewBox="0 0 4.4 3"><path d="M0.3 0.4L2.2 2.4L4.1 0.4" fill="none" stroke="#555" stroke-width="0.9"/></svg><div style="left:0px;top:290.2px;width:512px;height:15.8px;background:#e6e6e6;"></div><div style="left:0px;top:290.2px;width:512px;height:0.8px;background:#c6c6c6;"></div><svg style="left:16.6px;top:295.6px;" width="3" height="5" viewBox="0 0 3 5"><path d="M3 0L0 2.5L3 5Z" fill="#c4c4c4"/></svg><svg style="left:31.6px;top:295.6px;" width="3" height="5" viewBox="0 0 3 5"><path d="M0 0L3 2.5L0 5Z" fill="#c4c4c4"/></svg><div style="left:57.3px;top:290.2px;width:42.7px;height:13.4px;background:#fff;"></div><div style="left:57.3px;top:303px;width:42.7px;height:1.6px;background:#217346;"></div><span style="left:63.45px;top:292.5px;font-size:8.6px;color:#217346;font-weight:700;letter-spacing:0.17px;">Sheet1</span><span style="left:106.75px;top:292.5px;font-size:8.6px;color:#555;letter-spacing:0.26px;">Sheet2</span><div style="left:142.6px;top:293px;width:0.9px;height:10.4px;background:#b4b4b4;"></div><span style="left:149.65px;top:292.5px;font-size:8.6px;color:#555;letter-spacing:0.22px;">Sheet3</span><div style="left:185.1px;top:293px;width:0.9px;height:10.4px;background:#b4b4b4;"></div><svg style="left:203px;top:292.4px;" width="12" height="12" viewBox="0 0 12 12"><circle cx="6" cy="6" r="5.2" fill="none" stroke="#777" stroke-width="0.8"/><path d="M3.4 6H8.6M6 3.4V8.6" stroke="#666" stroke-width="0.9"/></svg><svg style="left:305.4px;top:294px;" width="1.2" height="8" viewBox="0 0 1.2 8"><path d="M0 0.8H1.2M0 3.6H1.2M0 6.4H1.2" stroke="#999" stroke-width="0.9"/></svg><div style="left:316.4px;top:292.8px;width:8.8px;height:10.4px;background:#fff;"></div><svg style="left:319.2px;top:295.6px;" width="2.8" height="4.6" viewBox="0 0 2.8 4.6"><path d="M2.8 0L0 2.3L2.8 4.6Z" fill="#555"/></svg><div style="left:326px;top:292.8px;width:143.2px;height:10.4px;background:#fff;box-shadow:0 0 0 0.6px #c9c9c9;"></div><div style="left:469.2px;top:292.8px;width:17.8px;height:10.4px;background:#d8d8d8;"></div><div style="left:487px;top:292.8px;width:9px;height:10.4px;background:#fff;"></div><svg style="left:490.4px;top:295.6px;" width="2.8" height="4.6" viewBox="0 0 2.8 4.6"><path d="M0 0L2.8 2.3L0 4.6Z" fill="#555"/></svg><div style="left:0px;top:306px;width:512px;height:15px;background:#f3f3f3;"></div><span style="left:4.45px;top:309.8px;font-size:7.2px;color:#666;letter-spacing:-0.24px;">Ready</span><div style="left:317.8px;top:306px;width:22px;height:15px;background:#c8c8c8;"></div><svg style="left:325px;top:309.4px;" width="7.4" height="7" viewBox="0 0 7.4 7"><path d="M0.4 0.4H7V6.6H0.4ZM0.4 2.4H7M0.4 4.5H7M2.6 0.4V6.6M4.8 0.4V6.6" fill="none" stroke="#666" stroke-width="0.7"/></svg><svg style="left:347px;top:309.4px;" width="7.8" height="7" viewBox="0 0 7.8 7"><path d="M0.4 0.4H7.4V6.6H0.4ZM2 0.4V6.6M5.8 0.4V6.6M2 2.4H5.8M2 4.5H5.8" fill="none" stroke="#777" stroke-width="0.7"/></svg><svg style="left:369px;top:309.4px;" width="7.8" height="7" viewBox="0 0 7.8 7"><path d="M0.4 0.4H7.4V6.6H0.4ZM2.6 0.4V3.6H5.6V0.4" fill="none" stroke="#777" stroke-width="0.7"/></svg><div style="left:387.5px;top:312.9px;width:4.6px;height:1px;background:#555;"></div><div style="left:394.3px;top:313.1px;width:67px;height:0.7px;background:#b0b0b0;"></div><div style="left:428.1px;top:309.4px;width:2.9px;height:7.4px;background:#555;"></div><svg style="left:464.4px;top:310px;" width="6.8" height="6.8" viewBox="0 0 6.8 6.8"><path d="M0 3.4H6.8M3.4 0V6.8" stroke="#555" stroke-width="1"/></svg><span style="left:479.35px;top:310.2px;font-size:7.4px;color:#666;letter-spacing:-0.19px;">110 %</span></div><div style="left:0;top:0;width:511px;height:321px;box-sizing:border-box;border:0.7px solid #1f6a41;"></div></div>
<div class="win" style="left:499px;top:121px"><div style="left:-0.7px;top:-0.8px;width:511px;height:321px;"><div style="left:0px;top:0px;width:512px;height:39px;background:#217346;"></div><svg style="left:0px;top:0px;overflow:hidden;" width="512" height="39" viewBox="0 0 512 39"><g fill="none" stroke="#196139" stroke-width="1.7" opacity="0.95"><circle cx="176" cy="10.5" r="1.8"/><path d="M178 10.5H224"/><circle cx="189" cy="24" r="9.5"/><circle cx="189" cy="24" r="4.5"/><path d="M184 24H196"/><circle cx="221" cy="23" r="1.8"/><path d="M223 23H300L318 32H345"/><path d="M290 10.5H300"/><circle cx="303" cy="10.5" r="1.8"/><circle cx="360" cy="8.5" r="17" stroke-width="3"/><path d="M351 18L369 0M357 0H369V12" stroke-width="3.2"/><path d="M300 0L320 14H340"/><path d="M440 28H470L495 3"/><path d="M480 39L511 8"/></g></svg><svg style="left:14.6px;top:6.6px;" width="9.6" height="8.4" viewBox="0 0 9.6 8.4"><path d="M0 0H9.6V8.4H0Z" fill="#fff"/><path d="M1.4 1.2H8.2V4.4H1.4Z" fill="#217346"/><path d="M2.6 6.2H7V8.4H2.6Z" fill="#217346"/><path d="M5 6.8H6.2V8.4H5Z" fill="#fff"/></svg><svg style="left:35px;top:6.6px;" width="10.4" height="8.8" viewBox="0 0 10.4 8.8"><path d="M1 3.6H6.2A3 3 0 0 1 6.2 8.4H4.6" fill="none" stroke="#fff" stroke-width="1.5"/><path d="M0 3.6L3.6 0.2V7Z" fill="#fff"/></svg><svg style="left:49.2px;top:10.01px;" width="3.6" height="1.98" viewBox="0 0 3.6 1.98"><path d="M0 0H3.6L1.8 1.98Z" fill="#fff"/></svg><svg style="left:58.6px;top:6.8px;" width="10" height="8" viewBox="0 0 10 8"><path d="M9 3.4H3.8A2.6 2.6 0 0 0 3.8 7.8H5" fill="none" stroke="#5d9a78" stroke-width="1.3"/><path d="M10 3.4L6.8 0.4V6.4Z" fill="#5d9a78"/></svg><svg style="left:73.4px;top:10.12px;" width="3.2" height="1.76" viewBox="0 0 3.2 1.76"><path d="M0 0H3.2L1.6 1.76Z" fill="#5d9a78"/></svg><svg style="left:85.6px;top:9px;" width="3.2" height="4.4" viewBox="0 0 3.2 4.4"><path d="M0.2 0H3V0.9H0.2Z M0 2H3.2L1.6 4Z" fill="#b5d3c2"/></svg><span style="left:201.15px;top:9.35px;font-size:8.1px;color:#a9cdb9;letter-spacing:-0.24px;">HideRowsColumns.xlsX - Excel</span><svg style="left:397.2px;top:7.6px;opacity:0.3;" width="9" height="6.8" viewBox="0 0 9 6.8"><path d="M0.5 0.5H8.5V6.3H0.5Z" fill="none" stroke="#fff" stroke-width="1"/><path d="M0.5 2H8.5" stroke="#fff" stroke-width="0.8"/><path d="M4.5 5.4V2.8M3.2 4L4.5 2.8L5.8 4" fill="none" stroke="#fff" stroke-width="0.8"/></svg><div style="left:430px;top:10px;width:7.2px;height:1px;background:#fff;opacity:0.3;"></div><svg style="left:460.2px;top:7.4px;opacity:0.3;" width="7.2" height="6.8" viewBox="0 0 7.2 6.8"><path d="M0.5 0.5H6.7V6.3H0.5Z" fill="none" stroke="#fff" stroke-width="1"/></svg><svg style="left:491.2px;top:7.4px;opacity:0.3;" width="7.2" height="6.8" viewBox="0 0 7.2 6.8"><path d="M0.3 0.3L6.9 6.5M6.9 0.3L0.3 6.5" fill="none" stroke="#fff" stroke-width="1"/></svg><div style="left:42.9px;top:23px;width:36.9px;height:16.2px;background:#f3f3f3;"></div><span style="left:14.15px;top:26.75px;font-size:8.7px;color:#fff;letter-spacing:-0.28px;">File</span><span style="left:49.45px;top:26.7px;font-size:8.8px;color:#217346;letter-spacing:-0.24px;">Home</span><span style="left:87.55px;top:26.8px;font-size:8.6px;color:#fff;letter-spacing:-0.27px;">Insert</span><span style="left:123.05px;top:26.9px;font-size:8.4px;color:#fff;letter-spacing:-0.27px;">Page Layout</span><span style="left:182.55px;top:26.95px;font-size:8.3px;color:#fff;letter-spacing:-0.26px;">Formulas</span><span style="left:231.15px;top:26.8px;font-size:8.6px;color:#fff;letter-spacing:-0.27px;">Data</span><span style="left:264.55px;top:27.5px;font-size:8.2px;color:#fff;letter-spacing:-0.25px;">Review</span><span style="left:305.65px;top:26.8px;font-size:8.6px;color:#fff;letter-spacing:-0.25px;">View</span><svg style="left:339.6px;top:26.2px;" width="6.6" height="10" viewBox="0 0 6.6 10"><path d="M3.3 0.5A2.8 2.8 0 0 1 4.9 5.6V7.2H1.7V5.6A2.8 2.8 0 0 1 3.3 0.5Z" fill="none" stroke="#fff" stroke-width="0.8"/><path d="M2 8.3H4.6M2.4 9.4H4.2" stroke="#fff" stroke-width="0.7"/></svg><span style="left:350.35px;top:26.7px;font-size:8.8px;color:#fff;letter-spacing:-0.2px;">Tell me what you want to do</span><div style="left:460.8px;top:22.8px;width:41.2px;height:15.2px;background:#1a5c38;"></div><svg style="left:465.4px;top:26px;" width="9.6" height="9.6" viewBox="0 0 9.6 9.6"><circle cx="4.4" cy="2.8" r="2.3" fill="none" stroke="#fff" stroke-width="0.9"/><path d="M0.5 9.2C0.8 6.4 2.4 5.4 4.4 5.4C5.4 5.4 6 5.6 6.6 6" fill="none" stroke="#fff" stroke-width="0.9"/><path d="M7.4 6V9.4M5.7 7.7H9.1" stroke="#fff" stroke-width="0.9"/></svg><span style="left:477.55px;top:27.5px;font-size:8.2px;color:#fff;letter-spacing:-0.24px;text-shadow:0.25px 0 0 #fff;">Share</span><div style="left:0px;top:39px;width:512px;height:61.4px;background:#f3f3f3;"></div><div style="left:0px;top:100.4px;width:512px;height:1.2px;background:#dcdcdc;"></div><div style="left:0px;top:101.6px;width:512px;height:3px;background:#e2e2e2;"></div><div style="left:53.6px;top:42px;width:0.9px;height:56px;background:#e1e1e1;"></div><div style="left:148px;top:42px;width:0.9px;height:56px;background:#e1e1e1;"></div><div style="left:233.2px;top:42px;width:0.9px;height:56px;background:#e1e1e1;"></div><div style="left:287.4px;top:42px;width:0.9px;height:56px;background:#e1e1e1;"></div><div style="left:399.8px;top:42px;width:0.9px;height:56px;background:#e1e1e1;"></div><div style="left:454px;top:42px;width:0.9px;height:56px;background:#e1e1e1;"></div><div style="left:484.4px;top:42px;width:0.9px;height:56px;background:#e1e1e1;"></div><span style="left:5.95px;top:91.3px;font-size:7.6px;color:#666;letter-spacing:-0.04px;">Clipboard</span><span style="left:89.45px;top:91.3px;font-size:7.6px;color:#666;letter-spacing:-0.25px;">Font</span><span style="left:170.15px;top:91.3px;font-size:7.6px;color:#666;letter-spacing:-0.23px;">Alignment</span><span style="left:242.65px;top:91.3px;font-size:7.6px;color:#666;letter-spacing:-0.26px;">Number</span><span style="left:334.85px;top:91.4px;font-size:7.4px;color:#666;letter-spacing:-0.28px;">Styles</span><span style="left:419.85px;top:92.05px;font-size:7.1px;color:#666;letter-spacing:-0.28px;">Cells</span><svg style="left:47px;top:92.8px;" width="4.4" height="4.4" viewBox="0 0 4.4 4.4"><path d="M0.4 3V0.4H3" fill="none" stroke="#777" stroke-width="0.7"/><path d="M1.6 1.6L3.8 3.8M3.9 2.2V3.9H2.2" fill="none" stroke="#777" stroke-width="0.7"/></svg><svg style="left:141.4px;top:92.8px;" width="4.4" height="4.4" viewBox="0 0 4.4 4.4"><path d="M0.4 3V0.4H3" fill="none" stroke="#777" stroke-width="0.7"/><path d="M1.6 1.6L3.8 3.8M3.9 2.2V3.9H2.2" fill="none" stroke="#777" stroke-width="0.7"/></svg><svg style="left:226.4px;top:92.8px;" width="4.4" height="4.4" viewBox="0 0 4.4 4.4"><path d="M0.4 3V0.4H3" fill="none" stroke="#777" stroke-width="0.7"/><path d="M1.6 1.6L3.8 3.8M3.9 2.2V3.9H2.2" fill="none" stroke="#777" stroke-width="0.7"/></svg><svg style="left:280.6px;top:92.8px;" width="4.4" height="4.4" viewBox="0 0 4.4 4.4"><path d="M0.4 3V0.4H3" fill="none" stroke="#777" stroke-width="0.7"/><path d="M1.6 1.6L3.8 3.8M3.9 2.2V3.9H2.2" fill="none" stroke="#777" stroke-width="0.7"/></svg><svg style="left:499px;top:92.4px;" width="6" height="3.8" viewBox="0 0 6 3.8"><path d="M0.4 3.4L3 0.7L5.6 3.4" fill="none" stroke="#555" stroke-width="0.9"/></svg><svg style="left:8.4px;top:42.6px;" width="19.4" height="22.2" viewBox="0 0 19.4 22.2"><path d="M0.3 3H14.7V18.6H0.3Z" fill="#e9c27d"/><path d="M4 1.6H11V4.6H4Z" fill="#6d6d6d"/><path d="M6 0.4H9V2.4H6Z" fill="#6d6d6d"/><path d="M5.4 3H9.6" stroke="#fff" stroke-width="0.7"/><path d="M10.2 10.4H16L18.8 13.2V21.8H10.2Z" fill="#fff" stroke="#8a8a8a" stroke-width="0.7"/><path d="M16 10.4V13.2H18.8" fill="none" stroke="#8a8a8a" stroke-width="0.7"/></svg><span style="left:7.05px;top:67.5px;font-size:8px;color:#444;letter-spacing:-0.27px;">Paste</span><svg style="left:14.7px;top:80.61px;" width="3.6" height="1.98" viewBox="0 0 3.6 1.98"><path d="M0 0H3.6L1.8 1.98Z" fill="#666"/></svg><svg style="left:32.2px;top:43.6px;" width="9.2" height="9.8" viewBox="0 0 9.2 9.8"><path d="M2 0.3L6.4 6.4M7.2 0.3L2.8 6.4" stroke="#555" stroke-width="0.9" fill="none"/><circle cx="2" cy="7.8" r="1.6" fill="none" stroke="#3a78c2" stroke-width="0.9"/><circle cx="7.2" cy="7.8" r="1.6" fill="none" stroke="#3a78c2" stroke-width="0.9"/></svg><svg style="left:32px;top:58.6px;" width="10.4" height="10" viewBox="0 0 10.4 10"><path d="M0.4 0.4H4.2L5.8 2V6.6H0.4Z" fill="#fff" stroke="#777" stroke-width="0.7"/><path d="M4 3.2H8L9.8 5V9.6H4Z" fill="#fff" stroke="#777" stroke-width="0.7"/><path d="M5.4 6H8.4M5.4 7.6H8.4" stroke="#3a78c2" stroke-width="0.7"/></svg><svg style="left:45.5px;top:62.61px;" width="3.6" height="1.98" viewBox="0 0 3.6 1.98"><path d="M0 0H3.6L1.8 1.98Z" fill="#666"/></svg><svg style="left:32.8px;top:74.4px;" width="9.4" height="8.6" viewBox="0 0 9.4 8.6"><path d="M5.6 0.6L8.8 3.2L7.4 4.6L4.2 2Z" fill="#666"/><path d="M4.4 2.6L6.8 4.8L3 8.2L0.6 6Z" fill="#e8b04e"/></svg><div style="left:57.5px;top:41.6px;width:55.4px;height:13.6px;background:#fff;box-shadow:0 0 0 0.5px #d6d6d6;"></div><div style="left:113.6px;top:41.6px;width:32px;height:13.6px;background:#fff;box-shadow:0 0 0 0.5px #d6d6d6;"></div><span style="left:59.05px;top:44.9px;font-size:8.8px;color:#444;letter-spacing:-0.22px;">Arial</span><svg style="left:106.3px;top:47.66px;" width="3.4" height="1.87" viewBox="0 0 3.4 1.87"><path d="M0 0H3.4L1.7 1.87Z" fill="#666"/></svg><span style="left:115.65px;top:45.15px;font-size:8.3px;color:#444;letter-spacing:-0.27px;">10</span><svg style="left:140.3px;top:47.66px;" width="3.4" height="1.87" viewBox="0 0 3.4 1.87"><path d="M0 0H3.4L1.7 1.87Z" fill="#666"/></svg><span style="left:61px;top:59.6px;font-size:8.6px;color:#444;font-weight:700;">B</span><span style="left:76.4px;top:59.6px;font-size:8.6px;color:#444;font-weight:700;font-style:italic;font-family:'Liberation Serif',serif;">I</span><span style="left:89.2px;top:59.6px;font-size:8.6px;color:#444;border-bottom:0.8px solid #444;padding-bottom:0.6px;">U</span><svg style="left:100.8px;top:62.66px;" width="3.4" height="1.87" viewBox="0 0 3.4 1.87"><path d="M0 0H3.4L1.7 1.87Z" fill="#666"/></svg><div style="left:108.5px;top:59px;width:0.8px;height:10px;background:#dadada;"></div><span style="left:115.8px;top:59.7px;font-size:9px;color:#444;">A</span><svg style="left:121px;top:59.4px;" width="2.6" height="1.8" viewBox="0 0 2.6 1.8"><path d="M0 1.8L1.3 0L2.6 1.8Z" fill="#3a78c2"/></svg><span style="left:129.4px;top:60.7px;font-size:8px;color:#444;">A</span><svg style="left:134px;top:59.6px;" width="2.6" height="1.8" viewBox="0 0 2.6 1.8"><path d="M0 0L1.3 1.8L2.6 0Z" fill="#3a78c2"/></svg><svg style="left:59px;top:74px;" width="9.6" height="9.6" viewBox="0 0 9.6 9.6"><path d="M0.5 0.5H9.1V9.1H0.5ZM4.8 0.5V9.1M0.5 4.8H9.1" fill="#fff" stroke="#b5b5b5" stroke-width="0.8"/></svg><svg style="left:72.3px;top:77.66px;" width="3.4" height="1.87" viewBox="0 0 3.4 1.87"><path d="M0 0H3.4L1.7 1.87Z" fill="#666"/></svg><div style="left:79.2px;top:73.5px;width:0.8px;height:10px;background:#dadada;"></div><svg style="left:85px;top:73px;" width="10.6" height="11" viewBox="0 0 10.6 11"><path d="M3.4 2.4L7.4 5.4L5 8H2.4L1.4 5.6Z" fill="#fff" stroke="#666" stroke-width="0.7"/><path d="M3.4 0.6V4" stroke="#666" stroke-width="0.7"/><path d="M8 5.6C8.8 6.6 9 7 9 7.5A0.8 0.8 0 0 1 7.4 7.5C7.4 7 7.6 6.6 8 5.6Z" fill="#3a78c2"/><path d="M0.2 8.6H10.4V10.9H0.2Z" fill="#ffee00"/></svg><svg style="left:98.3px;top:77.66px;" width="3.4" height="1.87" viewBox="0 0 3.4 1.87"><path d="M0 0H3.4L1.7 1.87Z" fill="#666"/></svg><span style="left:108.2px;top:73px;font-size:9.2px;color:#444;">A</span><div style="left:106.4px;top:81.5px;width:10.4px;height:2.4px;background:#f01010;"></div><svg style="left:119.7px;top:77.66px;" width="3.4" height="1.87" viewBox="0 0 3.4 1.87"><path d="M0 0H3.4L1.7 1.87Z" fill="#666"/></svg><svg style="left:153.4px;top:44.2px;" width="10" height="6.2" viewBox="0 0 10 6.2"><path d="M0 0.5H10" stroke="#8a8a8a" stroke-width="0.9"/><path d="M0 2.4H10" stroke="#8a8a8a" stroke-width="0.9"/><path d="M0 4.3H7" stroke="#8a8a8a" stroke-width="0.9"/></svg><svg style="left:167.3px;top:46.6px;" width="10" height="6.2" viewBox="0 0 10 6.2"><path d="M0 0.5H10" stroke="#8a8a8a" stroke-width="0.9"/><path d="M0 2.4H10" stroke="#8a8a8a" stroke-width="0.9"/><path d="M0 4.3H7" stroke="#8a8a8a" stroke-width="0.9"/></svg><div style="left:179.5px;top:41.6px;width:13.8px;height:14.2px;background:#c8c8c8;"></div><svg style="left:181.6px;top:48.6px;" width="10" height="6.2" viewBox="0 0 10 6.2"><path d="M0 0.5H10" stroke="#666" stroke-width="0.9"/><path d="M0 2.4H10" stroke="#666" stroke-width="0.9"/><path d="M0 4.3H7" stroke="#666" stroke-width="0.9"/></svg><svg style="left:196.6px;top:43.4px;" width="12" height="10.6" viewBox="0 0 12 10.6"><path d="M0.4 0.4H7V10.2H0.4ZM0.4 3.6H7M0.4 6.9H7M3.7 0.4V10.2" fill="#fff" stroke="#777" stroke-width="0.7"/><path d="M7 2.2H9.6A1.8 1.8 0 0 1 9.6 5.8H8.2" fill="none" stroke="#3a78c2" stroke-width="0.9"/><path d="M8.8 4.4L7.4 5.8L8.8 7.2Z" fill="#3a78c2"/></svg><svg style="left:153.4px;top:59.8px;" width="10" height="9.3" viewBox="0 0 10 9.3"><path d="M0 0.5H10" stroke="#8a8a8a" stroke-width="0.9"/><path d="M0 2.7H7" stroke="#8a8a8a" stroke-width="0.9"/><path d="M0 4.9H10" stroke="#8a8a8a" stroke-width="0.9"/><path d="M0 7.1H7" stroke="#8a8a8a" stroke-width="0.9"/></svg><svg style="left:167.3px;top:59.8px;" width="10" height="9.3" viewBox="0 0 10 9.3"><path d="M0 0.5H10" stroke="#8a8a8a" stroke-width="0.9"/><path d="M1.5 2.7H8.5" stroke="#8a8a8a" stroke-width="0.9"/><path d="M0 4.9H10" stroke="#8a8a8a" stroke-width="0.9"/><path d="M1.5 7.1H8.5" stroke="#8a8a8a" stroke-width="0.9"/></svg><svg style="left:181.4px;top:59.8px;" width="10" height="9.3" viewBox="0 0 10 9.3"><path d="M0 0.5H10" stroke="#8a8a8a" stroke-width="0.9"/><path d="M3 2.7H10" stroke="#8a8a8a" stroke-width="0.9"/><path d="M0 4.9H10" stroke="#8a8a8a" stroke-width="0.9"/><path d="M3 7.1H10" stroke="#8a8a8a" stroke-width="0.9"/></svg><svg style="left:196px;top:58px;" width="11.4" height="11" viewBox="0 0 11.4 11"><path d="M0.4 0.4H11V10.6H0.4ZM0.4 2.6H11M0.4 8.4H11M3.8 0.4V2.6M7.4 0.4V2.6M3.8 8.4V10.6M7.4 8.4V10.6" fill="#fff" stroke="#777" stroke-width="0.7"/><path d="M2.2 5.5H9.2" stroke="#3a78c2" stroke-width="0.9"/><path d="M3.4 4L1.6 5.5L3.4 7ZM8 4L9.8 5.5L8 7Z" fill="#3a78c2"/></svg><svg style="left:210.9px;top:62.66px;" width="3.4" height="1.87" viewBox="0 0 3.4 1.87"><path d="M0 0H3.4L1.7 1.87Z" fill="#666"/></svg><svg style="left:152.6px;top:74px;" width="10.8" height="9.4" viewBox="0 0 10.8 9.4"><path d="M0 0.5H10.8M5 2.6H10.8M5 4.7H10.8M5 6.8H10.8M0 8.9H10.8" stroke="#777" stroke-width="0.8"/><path d="M3.8 3V6.6L0.6 4.8Z" fill="#3a78c2"/><path d="M2 4.8H5" stroke="#3a78c2" stroke-width="1.2"/></svg><svg style="left:166.8px;top:74px;" width="10.8" height="9.4" viewBox="0 0 10.8 9.4"><path d="M0 0.5H10.8M5.4 2.6H10.8M5.4 4.7H10.8M5.4 6.8H10.8M0 8.9H10.8" stroke="#777" stroke-width="0.8"/><path d="M1.6 3V6.6L4.8 4.8Z" fill="#3a78c2"/><path d="M0 4.8H3" stroke="#3a78c2" stroke-width="1.2"/></svg><div style="left:181.2px;top:73.5px;width:0.8px;height:10px;background:#dadada;"></div><svg style="left:185.8px;top:73.6px;" width="10.6" height="10" viewBox="0 0 10.6 10"><path d="M1 5.6L5 1.6M2.6 7.2L6.6 3.2M4.4 8.6L7.6 5.4" stroke="#666" stroke-width="0.9"/><path d="M5.6 9.2L9.8 5" stroke="#777" stroke-width="0.8"/><path d="M10.2 3.8L10 6.2L8.4 4.6Z" fill="#777"/></svg><svg style="left:198.7px;top:77.66px;" width="3.4" height="1.87" viewBox="0 0 3.4 1.87"><path d="M0 0H3.4L1.7 1.87Z" fill="#666"/></svg><div style="left:207px;top:73.5px;width:0.8px;height:10px;background:#dadada;"></div><svg style="left:212px;top:74.6px;" width="9.4" height="8" viewBox="0 0 9.4 8"><path d="M0.2 1.4V5.8L3 3.6Z" fill="#3a78c2"/><path d="M6.8 0.6V7.6M8.6 0.6V7.6M9.2 0.6H6.2A2 2 0 0 0 6.2 4.4H6.8" fill="none" stroke="#666" stroke-width="0.8"/></svg><svg style="left:225.3px;top:77.66px;" width="3.4" height="1.87" viewBox="0 0 3.4 1.87"><path d="M0 0H3.4L1.7 1.87Z" fill="#666"/></svg><div style="left:235.8px;top:42px;width:49.8px;height:13.2px;background:#fff;box-shadow:0 0 0 0.5px #d6d6d6;"></div><span style="left:237.45px;top:45.7px;font-size:8.2px;color:#444;letter-spacing:-0.24px;">General</span><svg style="left:279.2px;top:47.66px;" width="3.4" height="1.87" viewBox="0 0 3.4 1.87"><path d="M0 0H3.4L1.7 1.87Z" fill="#666"/></svg><svg style="left:237.4px;top:58.8px;" width="10.8" height="10.4" viewBox="0 0 10.8 10.4"><path d="M0.5 0.6H10.3V6.4H0.5Z" fill="#3a78c2"/><path d="M1.6 1.8H9.2V5.2H1.6Z" fill="#fff"/><circle cx="5.4" cy="3.5" r="1.3" fill="#3a78c2"/><ellipse cx="6.6" cy="7" rx="2.6" ry="1.2" fill="#e8b04e"/><ellipse cx="6.6" cy="8.6" rx="2.6" ry="1.2" fill="#e8b04e"/></svg><svg style="left:251.9px;top:62.66px;" width="3.4" height="1.87" viewBox="0 0 3.4 1.87"><path d="M0 0H3.4L1.7 1.87Z" fill="#666"/></svg><span style="left:259.4px;top:58.3px;font-size:10.6px;color:#555;">%</span><span style="left:276.6px;top:54.4px;font-size:13px;color:#444;font-weight:700;">,</span><svg style="left:239.2px;top:74.4px;" width="8.4" height="9.2" viewBox="0 0 8.4 9.2"><path d="M0 2.2H3M1.8 0.8L0.2 2.2L1.8 3.6" fill="none" stroke="#3a78c2" stroke-width="0.9"/><text x="4.2" y="3.6" font-size="4.4" fill="#333" font-weight="700" font-family="Liberation Sans,sans-serif">0</text><text x="0.4" y="8.8" font-size="4.4" fill="#333" font-weight="700" font-family="Liberation Sans,sans-serif">.00</text></svg><svg style="left:252.6px;top:74.4px;" width="8.6" height="9.2" viewBox="0 0 8.6 9.2"><text x="2" y="3.6" font-size="4.4" fill="#333" font-weight="700" font-family="Liberation Sans,sans-serif">.00</text><path d="M0 7.2H3.2M1.6 5.8L3.2 7.2L1.6 8.6" fill="none" stroke="#3a78c2" stroke-width="0.9"/><text x="4.4" y="8.8" font-size="4.4" fill="#333" font-weight="700" font-family="Liberation Sans,sans-serif">.0</text></svg><svg style="left:292.2px;top:42.8px;" width="11" height="10.6" viewBox="0 0 11 10.6"><path d="M0.4 0.4H8.6V9.6H0.4ZM0.4 3.4H8.6M0.4 6.5H8.6M3 0.4V9.6" fill="#fff" stroke="#777" stroke-width="0.7"/><path d="M1 1H2.6V3H1Z" fill="#d24726"/><path d="M1 3.8H2.6V6H1Z" fill="#3a78c2"/><path d="M1 6.9H2.6V9H1Z" fill="#d24726"/><path d="M6.4 6.2H10.6V10.2H6.4Z" fill="#fff" stroke="#666" stroke-width="0.6"/><path d="M7.4 8.8L9.6 7.2" stroke="#666" stroke-width="0.6"/></svg><svg style="left:292.2px;top:58.4px;" width="11" height="10.6" viewBox="0 0 11 10.6"><path d="M0.4 0.4H9.6V6.4H0.4ZM0.4 2.4H9.6M0.4 4.4H9.6M3.4 0.4V6.4M6.6 0.4V6.4" fill="#fff" stroke="#777" stroke-width="0.7"/><path d="M9.8 2L6 7.4L5.4 9L7 8.2L10.6 2.8Z" fill="#555"/><path d="M2.6 7.4H6V9.8H2.6Z" fill="#3a78c2"/></svg><svg style="left:292.2px;top:73.4px;" width="11" height="10.6" viewBox="0 0 11 10.6"><path d="M0.4 0.4H9.6V6.4H0.4Z" fill="#fff" stroke="#777" stroke-width="0.7"/><path d="M1.6 1.6H8.4V5.2H1.6Z" fill="#c9d9ee"/><path d="M9.8 2L6 7.4L5.4 9L7 8.2L10.6 2.8Z" fill="#555"/><path d="M2.6 7.4H6V9.8H2.6Z" fill="#3a78c2"/></svg><span style="left:304.25px;top:44.1px;font-size:8.8px;color:#444;letter-spacing:-0.19px;">Conditional Formatting</span><svg style="left:390.8px;top:47.27px;" width="3.4" height="1.87" viewBox="0 0 3.4 1.87"><path d="M0 0H3.4L1.7 1.87Z" fill="#666"/></svg><span style="left:304.25px;top:58.85px;font-size:8.5px;color:#444;letter-spacing:-0.25px;">Format as Table</span><svg style="left:363.2px;top:61.86px;" width="3.4" height="1.87" viewBox="0 0 3.4 1.87"><path d="M0 0H3.4L1.7 1.87Z" fill="#666"/></svg><span style="left:304.25px;top:73.8px;font-size:8.4px;color:#444;letter-spacing:-0.24px;">Cell Styles</span><svg style="left:343px;top:76.86px;" width="3.4" height="1.87" viewBox="0 0 3.4 1.87"><path d="M0 0H3.4L1.7 1.87Z" fill="#666"/></svg><svg style="left:404.2px;top:42.8px;" width="10.8" height="10.4" viewBox="0 0 10.8 10.4"><path d="M0.4 0.4H6.4V2.4H0.4ZM0.4 7.4H6.4V10H0.4ZM3.4 0.4V2.4M3.4 7.4V10" fill="#fff" stroke="#777" stroke-width="0.7"/><path d="M3.2 4.9H10.4" stroke="#3a78c2" stroke-width="1.6"/><path d="M3.6 3.4L1.2 4.9L3.6 6.4Z" fill="#3a78c2"/></svg><svg style="left:404.2px;top:57.8px;" width="10.8" height="10.6" viewBox="0 0 10.8 10.6"><path d="M0.4 0.4H5.4V2.6H0.4ZM0.4 7.6H5.4V10.2H0.4ZM2.9 0.4V10.2" fill="#fff" stroke="#777" stroke-width="0.7"/><path d="M5.2 2.8L10 7.6M10 2.8L5.2 7.6" stroke="#e03c28" stroke-width="1.3"/></svg><svg style="left:404.2px;top:72.8px;" width="10.8" height="10.8" viewBox="0 0 10.8 10.8"><path d="M0.4 2.4H10.2V10.4H0.4Z" fill="#fff" stroke="#777" stroke-width="0.7"/><path d="M0.4 0.5H10.2" stroke="#3a78c2" stroke-width="0.9"/><path d="M3.4 4.6H7.4V8.4H3.4Z" fill="#2d5da8"/></svg><span style="left:416.65px;top:44.25px;font-size:8.5px;color:#444;letter-spacing:-0.26px;">Insert</span><svg style="left:441.7px;top:47.27px;" width="3.4" height="1.87" viewBox="0 0 3.4 1.87"><path d="M0 0H3.4L1.7 1.87Z" fill="#666"/></svg><span style="left:416.65px;top:58.7px;font-size:8.8px;color:#444;letter-spacing:-0.26px;">Delete</span><svg style="left:446.1px;top:61.86px;" width="3.4" height="1.87" viewBox="0 0 3.4 1.87"><path d="M0 0H3.4L1.7 1.87Z" fill="#666"/></svg><span style="left:416.65px;top:73.75px;font-size:8.5px;color:#444;letter-spacing:-0.24px;">Format</span><svg style="left:444.2px;top:76.86px;" width="3.4" height="1.87" viewBox="0 0 3.4 1.87"><path d="M0 0H3.4L1.7 1.87Z" fill="#666"/></svg><div style="left:458.5px;top:41.6px;width:20.8px;height:19.4px;background:#fff;box-shadow:0 0 0 0.5px #dcdcdc;"></div><svg style="left:463.4px;top:45.6px;" width="10.6" height="10.6" viewBox="0 0 10.6 10.6"><circle cx="6.4" cy="4.2" r="3.2" fill="none" stroke="#3a78c2" stroke-width="1.1"/><path d="M4.2 6.6L0.8 10" stroke="#3a78c2" stroke-width="1.4"/></svg><span style="left:456.25px;top:65.6px;font-size:8.8px;color:#444;letter-spacing:-0.17px;">Editing</span><svg style="left:467.6px;top:79.21px;" width="3.6" height="1.98" viewBox="0 0 3.6 1.98"><path d="M0 0H3.6L1.8 1.98Z" fill="#666"/></svg><div style="left:0px;top:104.6px;width:512px;height:24.6px;background:#e6e6e6;"></div><div style="left:4.7px;top:107.4px;width:67.8px;height:14.6px;background:#fff;"></div><span style="left:7.45px;top:112.4px;font-size:8.2px;color:#444;letter-spacing:0.27px;">G14</span><svg style="left:64.4px;top:114.01px;" width="3.6" height="1.98" viewBox="0 0 3.6 1.98"><path d="M0 0H3.6L1.8 1.98Z" fill="#666"/></svg><svg style="left:82.4px;top:110.6px;" width="1.2" height="8" viewBox="0 0 1.2 8"><path d="M0 0.5H1.2M0 2.8H1.2M0 5.1H1.2M0 7.4H1.2" stroke="#aaa" stroke-width="0.8"/></svg><div style="left:93.8px;top:107.4px;width:72.2px;height:14.6px;background:#fff;"></div><svg style="left:101.6px;top:111px;" width="7.6" height="7.4" viewBox="0 0 7.6 7.4"><path d="M0.5 0.5L7 6.9M7 0.5L0.5 6.9" stroke="#c2c2c2" stroke-width="0.9" fill="none"/></svg><svg style="left:125px;top:111px;" width="8.4" height="7.4" viewBox="0 0 8.4 7.4"><path d="M0.5 4L3 6.6L7.9 0.6" stroke="#c2c2c2" stroke-width="0.9" fill="none"/></svg><span style="left:148.8px;top:109.05px;font-size:11.5px;color:#555;font-style:italic;font-family:'Liberation Serif',serif;">f</span><span style="left:152.6px;top:113.3px;font-size:7.6px;color:#555;font-style:italic;font-family:'Liberation Serif',serif;">x</span><div style="left:0px;top:129.2px;width:512px;height:161px;background:#fff;"></div><div style="left:0px;top:129.2px;width:512px;height:12.7px;background:#e6e6e6;"></div><div style="left:0px;top:129.2px;width:21.2px;height:161px;background:#e6e6e6;"></div><svg style="left:10px;top:132.4px;" width="8.4" height="7.6" viewBox="0 0 8.4 7.6"><path d="M8.4 0V7.6H0Z" fill="#b7b7b7"/></svg><div style="left:20.7px;top:141.9px;width:1px;height:148.3px;background:#e3e3e3;"></div><div style="left:20.7px;top:130.7px;width:1px;height:11.2px;background:#c9c9c9;"></div><div style="left:68.6px;top:141.9px;width:1px;height:148.3px;background:#e3e3e3;"></div><div style="left:68.6px;top:130.7px;width:1px;height:11.2px;background:#c9c9c9;"></div><div style="left:116.5px;top:141.9px;width:1px;height:148.3px;background:#e3e3e3;"></div><div style="left:116.5px;top:130.7px;width:1px;height:11.2px;background:#c9c9c9;"></div><div style="left:164.4px;top:141.9px;width:1px;height:148.3px;background:#e3e3e3;"></div><div style="left:164.4px;top:130.7px;width:1px;height:11.2px;background:#c9c9c9;"></div><div style="left:212.3px;top:141.9px;width:1px;height:148.3px;background:#e3e3e3;"></div><div style="left:212.3px;top:130.7px;width:1px;height:11.2px;background:#c9c9c9;"></div><div style="left:260.2px;top:141.9px;width:1px;height:148.3px;background:#e3e3e3;"></div><div style="left:260.2px;top:130.7px;width:1px;height:11.2px;background:#c9c9c9;"></div><div style="left:308.1px;top:141.9px;width:1px;height:148.3px;background:#e3e3e3;"></div><div style="left:308.1px;top:130.7px;width:1px;height:11.2px;background:#c9c9c9;"></div><div style="left:356px;top:141.9px;width:1px;height:148.3px;background:#e3e3e3;"></div><div style="left:356px;top:130.7px;width:1px;height:11.2px;background:#c9c9c9;"></div><div style="left:403.9px;top:141.9px;width:1px;height:148.3px;background:#e3e3e3;"></div><div style="left:403.9px;top:130.7px;width:1px;height:11.2px;background:#c9c9c9;"></div><div style="left:451.8px;top:141.9px;width:1px;height:148.3px;background:#e3e3e3;"></div><div style="left:451.8px;top:130.7px;width:1px;height:11.2px;background:#c9c9c9;"></div><div style="left:499.7px;top:141.9px;width:1px;height:148.3px;background:#e3e3e3;"></div><div style="left:499.7px;top:130.7px;width:1px;height:11.2px;background:#c9c9c9;"></div><div style="left:21.2px;top:141.4px;width:489.8px;height:1px;background:#e3e3e3;"></div><div style="left:0px;top:141.4px;width:21.2px;height:1px;background:#c9c9c9;"></div><div style="left:21.2px;top:154.5px;width:489.8px;height:1px;background:#e3e3e3;"></div><div style="left:0px;top:154.5px;width:21.2px;height:1px;background:#c9c9c9;"></div><div style="left:21.2px;top:167.6px;width:489.8px;height:1px;background:#e3e3e3;"></div><div style="left:0px;top:167.6px;width:21.2px;height:1px;background:#c9c9c9;"></div><div style="left:21.2px;top:180.7px;width:489.8px;height:1px;background:#e3e3e3;"></div><div style="left:0px;top:180.7px;width:21.2px;height:1px;background:#c9c9c9;"></div><div style="left:21.2px;top:193.8px;width:489.8px;height:1px;background:#e3e3e3;"></div><div style="left:0px;top:193.8px;width:21.2px;height:1px;background:#c9c9c9;"></div><div style="left:21.2px;top:206.9px;width:489.8px;height:1px;background:#e3e3e3;"></div><div style="left:0px;top:206.9px;width:21.2px;height:1px;background:#c9c9c9;"></div><div style="left:21.2px;top:220px;width:489.8px;height:1px;background:#e3e3e3;"></div><div style="left:0px;top:220px;width:21.2px;height:1px;background:#c9c9c9;"></div><div style="left:21.2px;top:233.1px;width:489.8px;height:1px;background:#e3e3e3;"></div><div style="left:0px;top:233.1px;width:21.2px;height:1px;background:#c9c9c9;"></div><div style="left:21.2px;top:246.2px;width:489.8px;height:1px;background:#e3e3e3;"></div><div style="left:0px;top:246.2px;width:21.2px;height:1px;background:#c9c9c9;"></div><div style="left:21.2px;top:259.3px;width:489.8px;height:1px;background:#e3e3e3;"></div><div style="left:0px;top:259.3px;width:21.2px;height:1px;background:#c9c9c9;"></div><div style="left:21.2px;top:272.4px;width:489.8px;height:1px;background:#e3e3e3;"></div><div style="left:0px;top:272.4px;width:21.2px;height:1px;background:#c9c9c9;"></div><div style="left:21.2px;top:285.5px;width:489.8px;height:1px;background:#e3e3e3;"></div><div style="left:0px;top:285.5px;width:21.2px;height:1px;background:#c9c9c9;"></div><div style="left:0px;top:141.3px;width:512px;height:1px;background:#bdbdbd;"></div><div style="left:20.6px;top:129.2px;width:1px;height:161px;background:#bdbdbd;"></div><span style="left:41.85px;top:131.65px;font-size:9.9px;color:#222;">A</span><span style="left:89.48px;top:131.65px;font-size:9.9px;color:#222;">C</span><span style="left:137.38px;top:131.65px;font-size:9.9px;color:#222;">D</span><span style="left:185.55px;top:131.65px;font-size:9.9px;color:#222;">E</span><span style="left:233.73px;top:131.65px;font-size:9.9px;color:#222;">F</span><span style="left:280.8px;top:131.65px;font-size:9.9px;color:#222;">G</span><span style="left:328.98px;top:131.65px;font-size:9.9px;color:#222;">H</span><span style="left:379.07px;top:131.65px;font-size:9.9px;color:#222;">I</span><span style="left:425.87px;top:131.65px;font-size:9.9px;color:#222;">J</span><span style="left:472.95px;top:131.65px;font-size:9.9px;color:#222;">K</span><span style="left:8.25px;top:144.95px;font-size:9.9px;color:#1a1a1a;">1</span><span style="left:8.25px;top:158.05px;font-size:9.9px;color:#1a1a1a;">2</span><span style="left:8.25px;top:171.15px;font-size:9.9px;color:#1a1a1a;">4</span><span style="left:8.25px;top:184.25px;font-size:9.9px;color:#1a1a1a;">5</span><span style="left:8.25px;top:197.35px;font-size:9.9px;color:#1a1a1a;">6</span><span style="left:8.25px;top:210.45px;font-size:9.9px;color:#1a1a1a;">7</span><span style="left:8.25px;top:223.55px;font-size:9.9px;color:#1a1a1a;">8</span><span style="left:8.25px;top:236.65px;font-size:9.9px;color:#1a1a1a;">9</span><span style="left:5.49px;top:249.75px;font-size:9.9px;color:#1a1a1a;">10</span><span style="left:5.86px;top:262.85px;font-size:9.9px;color:#1a1a1a;">11</span><span style="left:5.49px;top:275.95px;font-size:9.9px;color:#1a1a1a;">12</span><span style="left:5.49px;top:289.05px;font-size:9.9px;color:#1a1a1a;">13</span><div style="left:21.2px;top:141.9px;width:47.9px;height:13.1px;background:#ffff00;"></div><span style="left:23.4px;top:145.5px;font-size:9px;color:#f00;font-weight:700;font-family:'DejaVu Sans','Liberation Sans',sans-serif;">Items A</span><div style="left:69.1px;top:141.9px;width:47.9px;height:13.1px;background:#ffff99;"></div><span style="left:71.3px;top:145.5px;font-size:9px;color:#f00;font-weight:700;font-family:'DejaVu Sans','Liberation Sans',sans-serif;letter-spacing:0.05px;">Items C</span><div style="left:117px;top:141.9px;width:47.9px;height:13.1px;background:#ffff99;"></div><span style="left:119.2px;top:145.5px;font-size:9px;color:#f00;font-weight:700;font-family:'DejaVu Sans','Liberation Sans',sans-serif;letter-spacing:-0.07px;">Items D</span><div style="left:164.9px;top:141.9px;width:47.9px;height:13.1px;background:#ffff99;"></div><span style="left:167.1px;top:145.5px;font-size:9px;color:#f00;font-weight:700;font-family:'DejaVu Sans','Liberation Sans',sans-serif;letter-spacing:0.12px;">Items E</span><div style="left:212.8px;top:141.9px;width:47.9px;height:13.1px;background:#ffff99;"></div><span style="left:215px;top:145.5px;font-size:9px;color:#f00;font-weight:700;font-family:'DejaVu Sans','Liberation Sans',sans-serif;letter-spacing:0.12px;">Items F</span><div style="left:260.7px;top:141.9px;width:47.9px;height:13.1px;background:#ffff99;"></div><span style="left:262.9px;top:145.5px;font-size:9px;color:#f00;font-weight:700;font-family:'DejaVu Sans','Liberation Sans',sans-serif;letter-spacing:-0.06px;">Items G</span><div style="left:308.6px;top:141.9px;width:47.9px;height:13.1px;background:#ffff99;"></div><span style="left:310.8px;top:145.5px;font-size:9px;color:#f00;font-weight:700;font-family:'DejaVu Sans','Liberation Sans',sans-serif;letter-spacing:-0.08px;">Items H</span><span style="left:23.25px;top:157.5px;font-size:9.8px;color:#000;font-weight:700;letter-spacing:-0.15px;">ROW-1</span><span style="left:104.49px;top:158.05px;font-size:9.9px;color:#111;">33</span><span style="left:152.39px;top:158.05px;font-size:9.9px;color:#111;">66</span><span style="left:201.02px;top:158.05px;font-size:9.9px;color:#111;">11</span><span style="left:248.19px;top:158.05px;font-size:9.9px;color:#111;">87</span><span style="left:296.09px;top:158.05px;font-size:9.9px;color:#111;">99</span><span style="left:343.99px;top:158.05px;font-size:9.9px;color:#111;">33</span><span style="left:23.25px;top:170.6px;font-size:9.8px;color:#000;font-weight:700;letter-spacing:-0.15px;">ROW-3</span><span style="left:104.49px;top:171.15px;font-size:9.9px;color:#111;">12</span><span style="left:152.39px;top:171.15px;font-size:9.9px;color:#111;">23</span><span style="left:200.29px;top:171.15px;font-size:9.9px;color:#111;">22</span><span style="left:248.19px;top:171.15px;font-size:9.9px;color:#111;">34</span><span style="left:296.82px;top:171.15px;font-size:9.9px;color:#111;">11</span><span style="left:343.99px;top:171.15px;font-size:9.9px;color:#111;">12</span><span style="left:23.25px;top:183.7px;font-size:9.8px;color:#000;font-weight:700;letter-spacing:-0.15px;">ROW-4</span><span style="left:104.49px;top:184.25px;font-size:9.9px;color:#111;">54</span><span style="left:152.39px;top:184.25px;font-size:9.9px;color:#111;">88</span><span style="left:200.29px;top:184.25px;font-size:9.9px;color:#111;">36</span><span style="left:248.19px;top:184.25px;font-size:9.9px;color:#111;">45</span><span style="left:296.09px;top:184.25px;font-size:9.9px;color:#111;">45</span><span style="left:343.99px;top:184.25px;font-size:9.9px;color:#111;">37</span><span style="left:23.25px;top:196.8px;font-size:9.8px;color:#000;font-weight:700;letter-spacing:-0.15px;">ROW-5</span><span style="left:104.49px;top:197.35px;font-size:9.9px;color:#111;">65</span><span style="left:152.39px;top:197.35px;font-size:9.9px;color:#111;">65</span><span style="left:200.29px;top:197.35px;font-size:9.9px;color:#111;">13</span><span style="left:248.19px;top:197.35px;font-size:9.9px;color:#111;">65</span><span style="left:301.59px;top:197.35px;font-size:9.9px;color:#111;">9</span><span style="left:343.99px;top:197.35px;font-size:9.9px;color:#111;">35</span><span style="left:23.25px;top:209.9px;font-size:9.8px;color:#000;font-weight:700;letter-spacing:-0.15px;">ROW-6</span><span style="left:104.49px;top:210.45px;font-size:9.9px;color:#111;">27</span><span style="left:152.39px;top:210.45px;font-size:9.9px;color:#111;">22</span><span style="left:200.29px;top:210.45px;font-size:9.9px;color:#111;">32</span><span style="left:248.19px;top:210.45px;font-size:9.9px;color:#111;">23</span><span style="left:296.09px;top:210.45px;font-size:9.9px;color:#111;">23</span><span style="left:343.99px;top:210.45px;font-size:9.9px;color:#111;">32</span><span style="left:23.25px;top:223px;font-size:9.8px;color:#000;font-weight:700;letter-spacing:-0.15px;">ROW-7</span><span style="left:98.98px;top:223.55px;font-size:9.9px;color:#111;">224</span><span style="left:146.88px;top:223.55px;font-size:9.9px;color:#111;">341</span><span style="left:194.78px;top:223.55px;font-size:9.9px;color:#111;">145</span><span style="left:242.68px;top:223.55px;font-size:9.9px;color:#111;">276</span><span style="left:290.58px;top:223.55px;font-size:9.9px;color:#111;">232</span><span style="left:338.48px;top:223.55px;font-size:9.9px;color:#111;">205</span><div style="left:20.7px;top:141.9px;width:1px;height:91.7px;background:#4c4c4c;"></div><div style="left:68.6px;top:141.9px;width:1px;height:91.7px;background:#4c4c4c;"></div><div style="left:116.5px;top:141.9px;width:1px;height:91.7px;background:#4c4c4c;"></div><div style="left:164.4px;top:141.9px;width:1px;height:91.7px;background:#4c4c4c;"></div><div style="left:212.3px;top:141.9px;width:1px;height:91.7px;background:#4c4c4c;"></div><div style="left:260.2px;top:141.9px;width:1px;height:91.7px;background:#4c4c4c;"></div><div style="left:308.1px;top:141.9px;width:1px;height:91.7px;background:#4c4c4c;"></div><div style="left:356px;top:141.9px;width:1px;height:91.7px;background:#4c4c4c;"></div><div style="left:21.2px;top:141.4px;width:335.3px;height:1px;background:#9a9a9a;"></div><div style="left:21.2px;top:154.5px;width:335.3px;height:1px;background:#6e6e6e;"></div><div style="left:21.2px;top:167.6px;width:335.3px;height:1px;background:#6e6e6e;"></div><div style="left:21.2px;top:180.7px;width:335.3px;height:1px;background:#6e6e6e;"></div><div style="left:21.2px;top:193.8px;width:335.3px;height:1px;background:#6e6e6e;"></div><div style="left:21.2px;top:206.9px;width:335.3px;height:1px;background:#6e6e6e;"></div><div style="left:21.2px;top:220px;width:335.3px;height:1px;background:#6e6e6e;"></div><div style="left:21.2px;top:233.1px;width:335.3px;height:1px;background:#6e6e6e;"></div><div style="left:496.6px;top:129.2px;width:15.4px;height:161px;background:#e6e6e6;"></div><div style="left:498px;top:132.4px;width:10px;height:7.6px;background:#fff;"></div><svg style="left:500.8px;top:135px;" width="4.4" height="2.6" viewBox="0 0 4.4 2.6"><path d="M0 2.6L2.2 0L4.4 2.6Z" fill="#666"/></svg><div style="left:498px;top:141.9px;width:10px;height:73.8px;background:#fff;box-shadow:0 0 0 0.6px #c4c4c4;"></div><div style="left:498px;top:215.7px;width:10px;height:64px;background:#d8d8d8;"></div><div style="left:498px;top:279.7px;width:10px;height:9.6px;background:#fff;"></div><svg style="left:500.8px;top:283.4px;" width="4.4" height="2.6" viewBox="0 0 4.4 2.6"><path d="M0 0L2.2 2.6L4.4 0Z" fill="#666"/></svg><div style="left:166.8px;top:107.4px;width:329.8px;height:14.6px;background:#fff;"></div><svg style="left:498.6px;top:113.4px;" width="4.4" height="3" viewBox="0 0 4.4 3"><path d="M0.3 0.4L2.2 2.4L4.1 0.4" fill="none" stroke="#555" stroke-width="0.9"/></svg><div style="left:0px;top:290.2px;width:512px;height:15.8px;background:#e6e6e6;"></div><div style="left:0px;top:290.2px;width:512px;height:0.8px;background:#c6c6c6;"></div><svg style="left:16.6px;top:295.6px;" width="3" height="5" viewBox="0 0 3 5"><path d="M3 0L0 2.5L3 5Z" fill="#c4c4c4"/></svg><svg style="left:31.6px;top:295.6px;" width="3" height="5" viewBox="0 0 3 5"><path d="M0 0L3 2.5L0 5Z" fill="#c4c4c4"/></svg><div style="left:57.3px;top:290.2px;width:42.7px;height:13.4px;background:#fff;"></div><div style="left:57.3px;top:303px;width:42.7px;height:1.6px;background:#217346;"></div><span style="left:63.45px;top:292.5px;font-size:8.6px;color:#217346;font-weight:700;letter-spacing:0.17px;">Sheet1</span><span style="left:106.75px;top:292.5px;font-size:8.6px;color:#555;letter-spacing:0.26px;">Sheet2</span><div style="left:142.6px;top:293px;width:0.9px;height:10.4px;background:#b4b4b4;"></div><span style="left:149.65px;top:292.5px;font-size:8.6px;color:#555;letter-spacing:0.22px;">Sheet3</span><div style="left:185.1px;top:293px;width:0.9px;height:10.4px;background:#b4b4b4;"></div><svg style="left:203px;top:292.4px;" width="12" height="12" viewBox="0 0 12 12"><circle cx="6" cy="6" r="5.2" fill="none" stroke="#777" stroke-width="0.8"/><path d="M3.4 6H8.6M6 3.4V8.6" stroke="#666" stroke-width="0.9"/></svg><svg style="left:305.4px;top:294px;" width="1.2" height="8" viewBox="0 0 1.2 8"><path d="M0 0.8H1.2M0 3.6H1.2M0 6.4H1.2" stroke="#999" stroke-width="0.9"/></svg><div style="left:316.4px;top:292.8px;width:8.8px;height:10.4px;background:#fff;"></div><svg style="left:319.2px;top:295.6px;" width="2.8" height="4.6" viewBox="0 0 2.8 4.6"><path d="M2.8 0L0 2.3L2.8 4.6Z" fill="#555"/></svg><div style="left:326px;top:292.8px;width:143.2px;height:10.4px;background:#fff;box-shadow:0 0 0 0.6px #c9c9c9;"></div><div style="left:469.2px;top:292.8px;width:17.8px;height:10.4px;background:#d8d8d8;"></div><div style="left:487px;top:292.8px;width:9px;height:10.4px;background:#fff;"></div><svg style="left:490.4px;top:295.6px;" width="2.8" height="4.6" viewBox="0 0 2.8 4.6"><path d="M0 0L2.8 2.3L0 4.6Z" fill="#555"/></svg><div style="left:0px;top:306px;width:512px;height:15px;background:#f3f3f3;"></div><span style="left:4.45px;top:309.8px;font-size:7.2px;color:#666;letter-spacing:-0.24px;">Ready</span><div style="left:317.8px;top:306px;width:22px;height:15px;background:#c8c8c8;"></div><svg style="left:325px;top:309.4px;" width="7.4" height="7" viewBox="0 0 7.4 7"><path d="M0.4 0.4H7V6.6H0.4ZM0.4 2.4H7M0.4 4.5H7M2.6 0.4V6.6M4.8 0.4V6.6" fill="none" stroke="#666" stroke-width="0.7"/></svg><svg style="left:347px;top:309.4px;" width="7.8" height="7" viewBox="0 0 7.8 7"><path d="M0.4 0.4H7.4V6.6H0.4ZM2 0.4V6.6M5.8 0.4V6.6M2 2.4H5.8M2 4.5H5.8" fill="none" stroke="#777" stroke-width="0.7"/></svg><svg style="left:369px;top:309.4px;" width="7.8" height="7" viewBox="0 0 7.8 7"><path d="M0.4 0.4H7.4V6.6H0.4ZM2.6 0.4V3.6H5.6V0.4" fill="none" stroke="#777" stroke-width="0.7"/></svg><div style="left:387.5px;top:312.9px;width:4.6px;height:1px;background:#555;"></div><div style="left:394.3px;top:313.1px;width:67px;height:0.7px;background:#b0b0b0;"></div><div style="left:428.1px;top:309.4px;width:2.9px;height:7.4px;background:#555;"></div><svg style="left:464.4px;top:310px;" width="6.8" height="6.8" viewBox="0 0 6.8 6.8"><path d="M0 3.4H6.8M3.4 0V6.8" stroke="#555" stroke-width="1"/></svg><span style="left:479.35px;top:310.2px;font-size:7.4px;color:#666;letter-spacing:-0.19px;">110 %</span></div><div style="left:0;top:0;width:511px;height:321px;box-sizing:border-box;border:0.7px solid #1f6a41;"></div></div>
<svg style="left:0;top:0" width="1024" height="457" viewBox="0 0 1024 457"><path d="M312.4 290.8C313.8 292.9 317.65 299.12 320.8 303.4C323.95 307.68 327.18 311.9 331.3 316.5C335.42 321.1 341.13 326.48 345.5 331C349.87 335.52 352.87 339.53 357.5 343.6C362.13 347.67 367.6 351.95 373.3 355.4C379 358.85 385.58 362.12 391.7 364.3C397.82 366.48 402.78 367.78 410 368.5C417.22 369.22 427.92 368.88 435 368.6C442.08 368.32 448.27 367.25 452.5 366.8C456.73 366.35 459.08 366.05 460.4 365.9L455.6 351.3L503.5 363.2L468.7 398.7L465.6 386.3C463.42 386.37 457.6 386.68 452.5 386.7C447.4 386.72 440.83 386.75 435 386.4C429.17 386.05 422.53 385.33 417.5 384.6C412.47 383.87 410.42 383.68 404.8 382C399.18 380.32 390.37 377.53 383.8 374.5C377.23 371.47 371.1 367.77 365.4 363.8C359.7 359.83 354.42 355.3 349.6 350.7C344.78 346.1 340.22 341.02 336.5 336.2C332.78 331.38 330.37 326.83 327.3 321.8C324.23 316.77 320.58 311.17 318.1 306C315.62 300.83 313.35 293.33 312.4 290.8Z" fill="#4a86c8"/></svg>
</body></html>
